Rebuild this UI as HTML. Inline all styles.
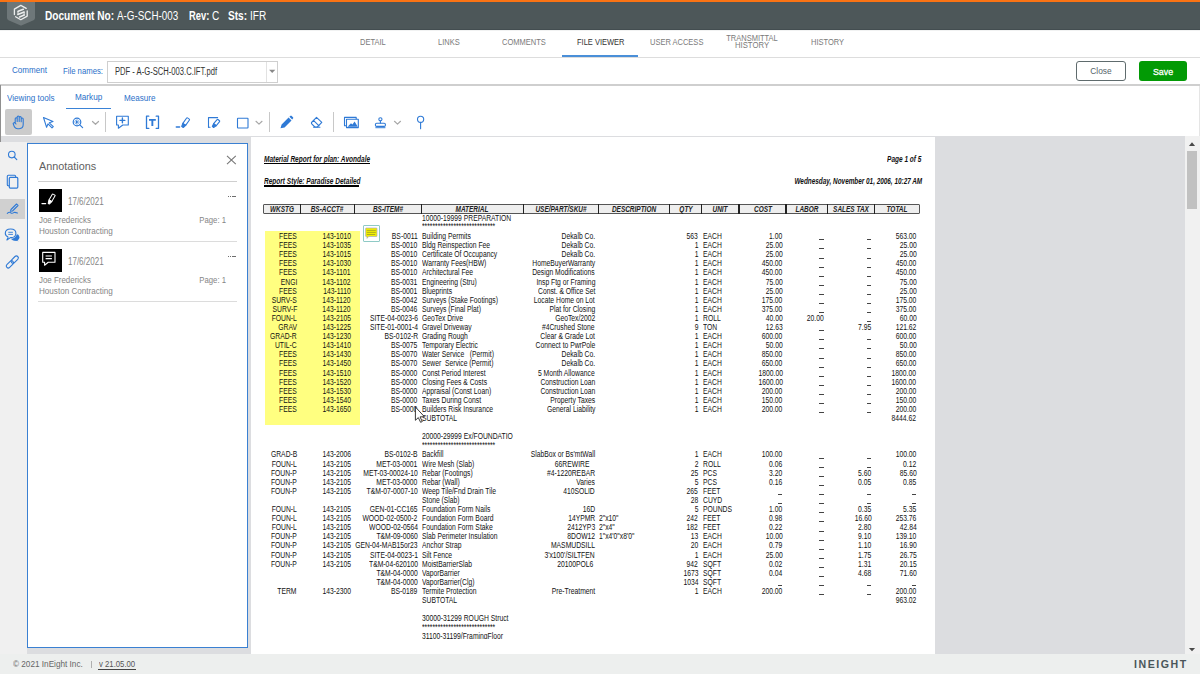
<!DOCTYPE html>
<html><head><meta charset="utf-8"><title>File Viewer</title>
<style>
html,body{margin:0;padding:0;}
body{width:1200px;height:674px;overflow:hidden;position:relative;background:#fff;font-family:"Liberation Sans", sans-serif;}
.t{position:absolute;white-space:nowrap;}
.z{position:absolute;width:0;height:0;}
.r{position:absolute;}
svg{position:absolute;overflow:visible;}
</style></head><body>

<div class="r" style="left:0px;top:0px;width:1200px;height:2px;background:#fa7314;"></div>
<div class="r" style="left:0px;top:2px;width:1200px;height:28px;background:#4d5759;"></div>
<div class="r" style="left:0px;top:29px;width:1200px;height:1px;background:#434d50;"></div>
<div class="r" style="left:0px;top:30px;width:1200px;height:1px;background:#f1f2f2;"></div>
<svg style="left:0;top:0" width="44" height="30" viewBox="0 0 44 30">
<path d="M7 2 H35 V18 Q35 19.5 33.5 20.3 L22 25.2 Q21 25.6 20 25.2 L8.5 20.3 Q7 19.5 7 18 Z" fill="#6e7779"/>
<g fill="none" stroke="#eceeee" stroke-width="1.3" stroke-linecap="round" stroke-linejoin="round">
<path d="M26.2 8.4 L20.8 5.4 L14.4 9.1 V14.6"/>
<path d="M15.6 16.8 L20.8 19.7 L27.2 16.1 V10.9"/>
<path d="M23.3 9.3 L18.1 11.3 M17.9 14.4 L24.1 12 M19.6 16.9 L24.2 15.1" stroke-width="1.6"/>
<path d="M18 11.4 V14.2 M24.1 12.2 V15" stroke-width="1"/>
</g>
</svg>
<div class="t" style="left:45.00px;top:9.54px;font-size:12px;line-height:12px;color:#fff;font-weight:bold;font-style:normal;transform:scaleX(0.843);transform-origin:0 0;">Document No:</div>
<div class="t" style="left:117.00px;top:9.54px;font-size:12px;line-height:12px;color:#fff;font-weight:normal;font-style:normal;transform:scaleX(0.82);transform-origin:0 0;">A-G-SCH-003</div>
<div class="t" style="left:189.00px;top:9.54px;font-size:12px;line-height:12px;color:#fff;font-weight:bold;font-style:normal;transform:scaleX(0.78);transform-origin:0 0;">Rev:</div>
<div class="t" style="left:211.60px;top:9.54px;font-size:12px;line-height:12px;color:#fff;font-weight:normal;font-style:normal;transform:scaleX(0.84);transform-origin:0 0;">C</div>
<div class="t" style="left:228.00px;top:9.54px;font-size:12px;line-height:12px;color:#fff;font-weight:bold;font-style:normal;transform:scaleX(0.843);transform-origin:0 0;">Sts:</div>
<div class="t" style="left:250.00px;top:9.54px;font-size:12px;line-height:12px;color:#fff;font-weight:normal;font-style:normal;transform:scaleX(0.84);transform-origin:0 0;">IFR</div>
<div class="r" style="left:0px;top:57px;width:1200px;height:1px;background:#dddddd;"></div>
<div class="t" style="left:359.80px;top:36.86px;font-size:9.5px;line-height:9.5px;color:#7a7a7a;font-weight:normal;font-style:normal;transform:scaleX(0.79);transform-origin:0 0;">DETAIL</div>
<div class="t" style="left:437.50px;top:36.86px;font-size:9.5px;line-height:9.5px;color:#7a7a7a;font-weight:normal;font-style:normal;transform:scaleX(0.79);transform-origin:0 0;">LINKS</div>
<div class="t" style="left:502.30px;top:36.86px;font-size:9.5px;line-height:9.5px;color:#7a7a7a;font-weight:normal;font-style:normal;transform:scaleX(0.79);transform-origin:0 0;">COMMENTS</div>
<div class="t" style="left:576.70px;top:36.86px;font-size:9.5px;line-height:9.5px;color:#333;font-weight:normal;font-style:normal;transform:scaleX(0.79);transform-origin:0 0;">FILE VIEWER</div>
<div class="r" style="left:562px;top:55px;width:76px;height:2px;background:#4a8fd8;"></div>
<div class="t" style="left:649.50px;top:36.86px;font-size:9.5px;line-height:9.5px;color:#7a7a7a;font-weight:normal;font-style:normal;transform:scaleX(0.79);transform-origin:0 0;">USER ACCESS</div>
<div class="t" style="left:751.50px;top:32.56px;font-size:9.5px;line-height:9.5px;color:#7a7a7a;font-weight:normal;font-style:normal;transform:translateX(-50%) scaleX(0.79);transform-origin:50% 0;">TRANSMITTAL</div>
<div class="t" style="left:751.50px;top:40.30px;font-size:9.8px;line-height:9.8px;color:#7a7a7a;font-weight:normal;font-style:normal;transform:translateX(-50%) scaleX(0.79);transform-origin:50% 0;">HISTORY</div>
<div class="t" style="left:810.50px;top:36.86px;font-size:9.5px;line-height:9.5px;color:#7a7a7a;font-weight:normal;font-style:normal;transform:scaleX(0.79);transform-origin:0 0;">HISTORY</div>
<div class="t" style="left:12.30px;top:65.47px;font-size:9.6px;line-height:9.6px;color:#2a6fc9;font-weight:normal;font-style:normal;transform:scaleX(0.84);transform-origin:0 0;">Comment</div>
<div class="t" style="left:63.00px;top:66.68px;font-size:9px;line-height:9px;color:#2a6fc9;font-weight:normal;font-style:normal;transform:scaleX(0.86);transform-origin:0 0;">File names:</div>
<div class="r" style="left:107px;top:61px;width:169px;height:20px;border:1px solid #cfcfcf;background:#fff;"></div>
<div class="r" style="left:266px;top:62px;width:1px;height:20px;background:#e2e2e2;"></div>
<svg style="left:268px;top:68px" width="9" height="6"><path d="M1.1 1.8 H7.3 L4.2 5 Z" fill="#888"/></svg>
<div class="t" style="left:114.60px;top:66.53px;font-size:10px;line-height:10px;color:#333;font-weight:normal;font-style:normal;transform:scaleX(0.762);transform-origin:0 0;">PDF - A-G-SCH-003.C.IFT.pdf</div>
<div class="r" style="left:1076px;top:61px;width:48px;height:18px;border:1px solid #5f6b6d;border-radius:3px;background:#fff;"></div>
<div class="t" style="left:1100.50px;top:66.93px;font-size:9.3px;line-height:9.3px;color:#55646a;font-weight:normal;font-style:normal;transform:translateX(-50%) scaleX(0.9);transform-origin:50% 0;">Close</div>
<div class="r" style="left:1139px;top:61px;width:48px;height:20px;border-radius:3px;background:#029a05;"></div>
<div class="t" style="left:1162.80px;top:66.67px;font-size:9.6px;line-height:9.6px;color:#fff;font-weight:normal;font-style:normal;transform:translateX(-50%) scaleX(0.92);transform-origin:50% 0;-webkit-text-stroke:0.3px #fff;">Save</div>
<div class="r" style="left:0px;top:84px;width:1200px;height:2px;background:#cfcfcf;"></div>
<div class="r" style="left:0px;top:85px;width:1.2px;height:57px;background:#8f8f8f;"></div>
<div class="r" style="left:1199px;top:86px;width:1px;height:50px;background:#e5e5e5;"></div>
<div class="t" style="left:7.00px;top:94.08px;font-size:9px;line-height:9px;color:#2a6fc9;font-weight:normal;font-style:normal;transform:scaleX(0.9);transform-origin:0 0;">Viewing tools</div>
<div class="t" style="left:75.00px;top:93.13px;font-size:9.3px;line-height:9.3px;color:#2a6fc9;font-weight:normal;font-style:normal;transform:scaleX(0.88);transform-origin:0 0;">Markup</div>
<div class="r" style="left:66px;top:107.8px;width:45px;height:1.6px;background:#3a82d6;"></div>
<div class="t" style="left:124.00px;top:94.08px;font-size:9px;line-height:9px;color:#2a6fc9;font-weight:normal;font-style:normal;transform:scaleX(0.9);transform-origin:0 0;">Measure</div>
<div class="r" style="left:5px;top:109px;width:27px;height:26px;border-radius:2px;background:#cbcbcb;"></div>
<svg style="left:0;top:100px" width="460" height="40" viewBox="0 100 460 40">
<g fill="none" stroke="#2f7ad6" stroke-width="1.1" stroke-linecap="round" stroke-linejoin="round">
<!-- hand -->
<path d="M15.2 122.5 V118.8 a1 1 0 0 1 2 0 V121.5 M17.2 121.5 V117 a1 1 0 0 1 2 0 V121.5 M19.2 121.5 V117.6 a1 1 0 0 1 2 0 V121.8 M21.2 121.8 V119 a1 1 0 0 1 2 0 V124.5 q0 4 -4 4.2 h-1.5 q-2 0 -3.3 -1.8 L13.4 124.3 q-.6 -1.2 .6 -1.6 q.9 -.3 1.5 .7 L16 124"/>
<!-- arrow -->
<path d="M43.5 117.5 L53 121.5 L49.3 122.8 L53.3 126.6 L52 127.8 L48 123.9 L46.6 127.3 Z"/>
<!-- zoom -->
<circle cx="77" cy="122" r="3.8" stroke-width="1.2"/>
<path d="M79.8 124.8 L82.6 127.6" stroke-width="1.2"/>
<circle cx="77" cy="122" r="2.1" stroke-width=".6" stroke-dasharray=".9 .7"/>
<!-- comment plus -->
<path d="M116.6 116.3 H128.3 V125 H122.8 L118.4 128.2 V125 H116.6 Z"/>
<path d="M122.4 118 V122.8 M120 120.4 H124.8" stroke-width="1.4"/>
<!-- T bracket -->
<path d="M148.8 116.2 H146.5 V128.4 H148.8 M156.2 116.2 H158.5 V128.4 H156.2" stroke-width="1.3"/>
<!-- highlighter -->
<g transform="translate(182.3 127.2) rotate(35)"><path d="M-1.7 -3.4 V-10 Q-1.7 -10.6 -1.1 -10.6 H1.1 Q1.7 -10.6 1.7 -10 V-3.4 Z"/><path d="M-1.7 -3.4 L-1 -0.3 H0.9 L1.7 -3.4 Z" fill="#2f7ad6"/></g>
<path d="M176.3 127 H179.6" stroke-width="1.4"/>
<!-- free text sign -->
<path d="M208.5 127.2 V117.6 H217.6"/>
<path d="M208.5 127.2 H210"/>
<g transform="translate(212.8 127.2) rotate(40)"><path d="M-1.6 -3.2 V-8.6 Q-1.6 -9.2 -1 -9.2 H1 Q1.6 -9.2 1.6 -8.6 V-3.2 Z"/><path d="M-1.6 -3.2 L-.9 -0.3 H0.8 L1.6 -3.2 Z" fill="#2f7ad6"/></g>
<!-- square -->
<rect x="237.5" y="118.3" width="10.5" height="9.7" rx=".5"/>
<!-- eraser -->
<path d="M311.5 122.5 L316.5 117.3 L321.8 122.4 L317.3 127 H314.8 L311.5 123.6 Z M313.5 120.4 L319 125.8"/>
<path d="M313.5 127.3 H320" stroke-width=".9"/>
<!-- image -->
<rect x="344.5" y="117.4" width="11.7" height="8.3"/>
<rect x="346.5" y="119.3" width="11.8" height="8.3" fill="#fff"/>
<!-- stamp -->
<circle cx="380.4" cy="119.3" r="1.6"/>
<path d="M380.4 121 V123"/>
<rect x="375.4" y="123.2" width="10" height="3.2" rx="1.2"/>
<!-- pin -->
<circle cx="420.6" cy="119.3" r="3.1"/>
<path d="M420.6 122.5 V128.8"/>
</g>
<path d="M149 118.9 H155.8 V120.8 H153.3 V126 H151.4 V120.8 H149 Z" fill="#2f7ad6"/>
<path d="M76 120.3 L78.6 122 L76 123.7 Z" fill="#2f7ad6"/>
<path d="M347.5 126.8 L351 123.2 L352.4 124.4 L354.6 121.5 L357.8 126.8 Z" fill="#2f7ad6"/>
<path d="M375.4 127.2 H385.4 V128.2 H375.4 Z" fill="#2f7ad6"/>
<path d="M280.5 128.3 L281.6 124.6 L288.6 117.6 L291.5 120.5 L284.5 127.5 Z M289.4 116.8 L290.3 115.9 a1 1 0 0 1 1.4 0 L293 117.2 a1 1 0 0 1 0 1.4 L292.2 119.5 Z" fill="#2f7ad6"/>
<g fill="none" stroke="#a8a8a8" stroke-width="1.2" stroke-linecap="round" stroke-linejoin="round">
<path d="M92.5 121.5 L95.5 124.3 L98.5 121.5"/>
<path d="M256 121.3 L259 124.1 L262 121.3"/>
<path d="M394.5 121.3 L397.5 124.1 L400.5 121.3"/>
</g>
<path d="M105.5 112 V132 M269.5 112 V132 M333.5 112 V132" stroke="#c8c8c8" stroke-width="1"/>
</svg>
<div class="r" style="left:0px;top:136px;width:1185px;height:518px;background:#dcdde0;"></div>
<div class="r" style="left:0px;top:136px;width:27px;height:6px;background:#dcdde0;"></div>
<div class="r" style="left:0px;top:142px;width:27px;height:512px;background:#f0f0f0;"></div>
<div class="r" style="left:0px;top:136px;width:1.2px;height:6px;background:#8f8f8f;"></div>
<div class="r" style="left:1185px;top:136px;width:15px;height:518px;background:#f1f1f1;"></div>
<svg style="left:1185px;top:136px" width="15" height="518"><path d="M3.9 10 L7 6.3 L10.1 10 Z" fill="#4a4a4a"/><path d="M3.9 512 L10.1 512 L7 515.2 Z" fill="#4a4a4a"/></svg>
<div class="r" style="left:1187px;top:151px;width:10px;height:58px;background:#c1c1c1;"></div>
<div class="r" style="left:0px;top:199px;width:25px;height:20px;background:#d0d0d0;"></div>
<svg style="left:0;top:140px" width="27" height="140" viewBox="0 140 27 140">
<g fill="none" stroke="#2f7ad6" stroke-width="1.1" stroke-linecap="round" stroke-linejoin="round">
<circle cx="11.8" cy="154.6" r="3.3"/>
<path d="M14.2 157 L16.8 159.6"/>
<rect x="7.3" y="175.3" width="8.3" height="10.5" rx="1"/>
<rect x="9.3" y="177.4" width="8.5" height="10.7" rx="1" fill="#f0f0f0" stroke-width="1.2"/>
<path d="M11 209.5 L16.5 204 L18 205.5 L12.5 211 L10.5 211.3 Z"/>
<path d="M7.3 213.3 q2 -1.8 3.5 -.5 q1.2 1 3 -.2 q1.3 -.6 3.6 .5"/>

<rect x="5.6" y="262.4" width="8.6" height="3.9" rx="1.95" transform="rotate(-45 9.9 264.35)"/>
<rect x="10.4" y="257.6" width="8.6" height="3.9" rx="1.95" transform="rotate(-45 14.7 259.55)"/>
</g>
<ellipse cx="15.1" cy="237.3" rx="4.3" ry="3.4" fill="#2f7ad6"/>
<path d="M16.5 239.5 L18.6 241.2 L14 240.2 Z" fill="#2f7ad6"/>
<ellipse cx="10.6" cy="233.3" rx="5.3" ry="4.3" fill="#f0f0f0" stroke="#f0f0f0" stroke-width="2.2"/>
<path d="M8 237 L6.8 240.2 L10.6 237.9" fill="#f0f0f0" stroke="#f0f0f0" stroke-width="1.5"/>
<g fill="none" stroke="#2f7ad6" stroke-width="1.1" stroke-linejoin="round">
<path d="M8.2 237.1 L6.9 240 L10.4 237.6 Q15.9 237.8 15.9 233.3 Q15.9 229 10.6 229 Q5.3 229 5.3 233.3 Q5.3 235.9 8.2 237.1"/>
<path d="M8.3 232.3 H12.9 M8.3 234.4 H12.9" stroke-width=".9"/>
</g>
</svg>
<div class="r" style="left:27px;top:143px;width:219px;height:503px;border:1px solid #3a80d2;background:#fff;"></div>
<div class="t" style="left:38.70px;top:160.51px;font-size:10.5px;line-height:10.5px;color:#606060;font-weight:normal;font-style:normal;transform:scaleX(1.03);transform-origin:0 0;">Annotations</div>
<svg style="left:226px;top:155px" width="11" height="10"><path d="M1 .8 L9.8 9.2 M9.8 .8 L1 9.2" stroke="#777" stroke-width="1.1"/></svg>
<div class="r" style="left:38px;top:181px;width:199px;height:1px;background:#cfcfcf;"></div>
<div class="r" style="left:39px;top:189px;width:23px;height:23px;background:#000;"></div>
<div class="t" style="left:67.80px;top:196.84px;font-size:10px;line-height:10px;color:#858585;font-weight:normal;font-style:normal;transform:scaleX(0.8);transform-origin:0 0;">17/6/2021</div>
<div class="t" style="left:38.50px;top:215.78px;font-size:9px;line-height:9px;color:#868686;font-weight:normal;font-style:normal;transform:scaleX(0.88);transform-origin:0 0;">Joe Fredericks</div>
<div class="t" style="left:38.50px;top:226.78px;font-size:9px;line-height:9px;color:#868686;font-weight:normal;font-style:normal;transform:scaleX(0.9);transform-origin:0 0;">Houston Contracting</div>
<div class="z" style="left:226.10px;top:216.38px;"><div class="t" style="right:0;top:0;font-size:9px;line-height:9px;color:#868686;font-weight:normal;font-style:normal;transform:scaleX(0.86);transform-origin:100% 0;">Page: 1</div></div>
<div class="r" style="left:228px;top:196px;width:8px;height:1px;background:repeating-linear-gradient(90deg,#6e6e6e 0 1.4px,transparent 1.4px 2.1px);"></div>
<div class="r" style="left:38px;top:241px;width:199px;height:1px;background:#dcdcdc;"></div>
<div class="r" style="left:39px;top:249px;width:23px;height:23px;background:#000;"></div>
<div class="t" style="left:67.80px;top:256.84px;font-size:10px;line-height:10px;color:#858585;font-weight:normal;font-style:normal;transform:scaleX(0.8);transform-origin:0 0;">17/6/2021</div>
<div class="t" style="left:38.50px;top:275.78px;font-size:9px;line-height:9px;color:#868686;font-weight:normal;font-style:normal;transform:scaleX(0.88);transform-origin:0 0;">Joe Fredericks</div>
<div class="t" style="left:38.50px;top:286.78px;font-size:9px;line-height:9px;color:#868686;font-weight:normal;font-style:normal;transform:scaleX(0.9);transform-origin:0 0;">Houston Contracting</div>
<div class="z" style="left:226.10px;top:276.38px;"><div class="t" style="right:0;top:0;font-size:9px;line-height:9px;color:#868686;font-weight:normal;font-style:normal;transform:scaleX(0.86);transform-origin:100% 0;">Page: 1</div></div>
<div class="r" style="left:228px;top:256px;width:8px;height:1px;background:repeating-linear-gradient(90deg,#6e6e6e 0 1.4px,transparent 1.4px 2.1px);"></div>
<div class="r" style="left:38px;top:301px;width:199px;height:1px;background:#dcdcdc;"></div>
<svg style="left:39px;top:189px" width="23" height="23" viewBox="0 0 23 23">
<g fill="none" stroke="#fff" stroke-width="1.1" stroke-linejoin="round" stroke-linecap="round">
<g transform="translate(9.6 14.9) rotate(30)" stroke-width="1"><path d="M-1.6 -3.6 V-10.2 Q-1.6 -10.7 -1.1 -10.7 H1.1 Q1.6 -10.7 1.6 -10.2 V-3.6 Z"/><path d="M-1.6 -3.6 L-.6 -0.2 H.6 L1.6 -3.6 Z" fill="#fff"/></g>
<path d="M2.9 14.6 H6.7" stroke-width="1.1"/>
</g></svg>
<svg style="left:39px;top:249px" width="23" height="23" viewBox="0 0 23 23">
<g fill="none" stroke="#fff" stroke-width="1.1" stroke-linejoin="round">
<path d="M3.7 3.4 H16 V13.3 H9.2 L5.6 16.2 V13.3 H3.7 Z"/>
<path d="M6.6 7 H12.9 M6.6 9.7 H12.9" stroke-width="1.2"/>
</g></svg>
<div class="r" style="left:0px;top:654px;width:1200px;height:20px;background:#edefee;"></div>
<div class="t" style="left:13.00px;top:659.88px;font-size:9px;line-height:9px;color:#666;font-weight:normal;font-style:normal;transform:scaleX(0.91);transform-origin:0 0;">© 2021 InEight Inc.</div>
<div class="r" style="left:91px;top:661px;width:1px;height:7px;background:#b0b0b0;"></div>
<div class="t" style="left:98.50px;top:659.88px;font-size:9px;line-height:9px;color:#555;font-weight:normal;font-style:normal;transform:scaleX(0.86);transform-origin:0 0;">v 21.05.00</div>
<div class="r" style="left:98px;top:668.5px;width:38px;height:1px;background:#444;"></div>
<div class="t" style="left:1134.30px;top:659.53px;font-size:10px;line-height:10px;color:#4a565a;font-weight:bold;font-style:normal;transform:scaleX(1.06);transform-origin:0 0;letter-spacing:1.45px;">INEIGHT</div>
<div class="r" style="left:251px;top:137px;width:684px;height:517px;background:#fff;"></div>
<div class="r" style="left:0;top:0;width:1200px;height:639px;overflow:hidden;">
<div class="t" style="left:264.20px;top:155.15px;font-size:8.8px;line-height:8.8px;color:#111;font-weight:bold;font-style:italic;transform:scaleX(0.74);transform-origin:0 0;">Material Report for plan: Avondale</div>
<div class="r" style="left:264px;top:162.5px;width:105.5px;height:1.5px;background:#000;"></div>
<div class="t" style="left:264.20px;top:176.95px;font-size:8.8px;line-height:8.8px;color:#111;font-weight:bold;font-style:italic;transform:scaleX(0.74);transform-origin:0 0;">Report Style: Paradise Detailed</div>
<div class="r" style="left:263.5px;top:185px;width:95px;height:1.6px;background:#000;"></div>
<div class="z" style="left:921.80px;top:155.15px;"><div class="t" style="right:0;top:0;font-size:8.8px;line-height:8.8px;color:#111;font-weight:bold;font-style:italic;transform:scaleX(0.74);transform-origin:100% 0;">Page 1 of 5</div></div>
<div class="z" style="left:922.40px;top:176.95px;"><div class="t" style="right:0;top:0;font-size:8.8px;line-height:8.8px;color:#111;font-weight:bold;font-style:italic;transform:scaleX(0.725);transform-origin:100% 0;">Wednesday, November 01, 2006, 10:27 AM</div></div>
<div class="r" style="left:263px;top:204px;width:655px;height:8px;border:1.2px solid #555;border-radius:1px;background:#eeeeee;"></div>
<div class="r" style="left:299.9px;top:204px;width:1.3px;height:10px;background:#222;"></div>
<div class="r" style="left:353.7px;top:204px;width:1.3px;height:10px;background:#222;"></div>
<div class="r" style="left:420.9px;top:204px;width:1.3px;height:10px;background:#222;"></div>
<div class="r" style="left:522.6999999999999px;top:204px;width:1.3px;height:10px;background:#222;"></div>
<div class="r" style="left:598.1px;top:204px;width:1.3px;height:10px;background:#222;"></div>
<div class="r" style="left:669.1px;top:204px;width:1.3px;height:10px;background:#222;"></div>
<div class="r" style="left:700.9px;top:204px;width:1.3px;height:10px;background:#222;"></div>
<div class="r" style="left:738.4px;top:204px;width:1.3px;height:10px;background:#222;"></div>
<div class="r" style="left:785.4px;top:204px;width:1.3px;height:10px;background:#222;"></div>
<div class="r" style="left:826.6px;top:204px;width:1.3px;height:10px;background:#222;"></div>
<div class="r" style="left:873.6px;top:204px;width:1.3px;height:10px;background:#222;"></div>
<div class="t" style="left:281.75px;top:203.90px;font-size:9.8px;line-height:9.8px;color:#222;font-weight:bold;font-style:italic;transform:translateX(-50%) scaleX(0.66);transform-origin:50% 0;">WKSTG</div>
<div class="t" style="left:327.40px;top:203.90px;font-size:9.8px;line-height:9.8px;color:#222;font-weight:bold;font-style:italic;transform:translateX(-50%) scaleX(0.66);transform-origin:50% 0;">BS-ACCT#</div>
<div class="t" style="left:387.90px;top:203.90px;font-size:9.8px;line-height:9.8px;color:#222;font-weight:bold;font-style:italic;transform:translateX(-50%) scaleX(0.66);transform-origin:50% 0;">BS-ITEM#</div>
<div class="t" style="left:472.40px;top:203.90px;font-size:9.8px;line-height:9.8px;color:#222;font-weight:bold;font-style:italic;transform:translateX(-50%) scaleX(0.66);transform-origin:50% 0;">MATERIAL</div>
<div class="t" style="left:561.00px;top:203.90px;font-size:9.8px;line-height:9.8px;color:#222;font-weight:bold;font-style:italic;transform:translateX(-50%) scaleX(0.66);transform-origin:50% 0;">USE/PART/SKU#</div>
<div class="t" style="left:634.20px;top:203.90px;font-size:9.8px;line-height:9.8px;color:#222;font-weight:bold;font-style:italic;transform:translateX(-50%) scaleX(0.66);transform-origin:50% 0;">DESCRIPTION</div>
<div class="t" style="left:685.60px;top:203.90px;font-size:9.8px;line-height:9.8px;color:#222;font-weight:bold;font-style:italic;transform:translateX(-50%) scaleX(0.66);transform-origin:50% 0;">QTY</div>
<div class="t" style="left:720.25px;top:203.90px;font-size:9.8px;line-height:9.8px;color:#222;font-weight:bold;font-style:italic;transform:translateX(-50%) scaleX(0.66);transform-origin:50% 0;">UNIT</div>
<div class="t" style="left:762.50px;top:203.90px;font-size:9.8px;line-height:9.8px;color:#222;font-weight:bold;font-style:italic;transform:translateX(-50%) scaleX(0.66);transform-origin:50% 0;">COST</div>
<div class="t" style="left:806.60px;top:203.90px;font-size:9.8px;line-height:9.8px;color:#222;font-weight:bold;font-style:italic;transform:translateX(-50%) scaleX(0.66);transform-origin:50% 0;">LABOR</div>
<div class="t" style="left:850.70px;top:203.90px;font-size:9.8px;line-height:9.8px;color:#222;font-weight:bold;font-style:italic;transform:translateX(-50%) scaleX(0.66);transform-origin:50% 0;">SALES TAX</div>
<div class="t" style="left:896.85px;top:203.90px;font-size:9.8px;line-height:9.8px;color:#222;font-weight:bold;font-style:italic;transform:translateX(-50%) scaleX(0.66);transform-origin:50% 0;">TOTAL</div>
<div class="r" style="left:264.6px;top:231px;width:95.7px;height:194px;background:#ffff80;"></div>
<div class="r" style="left:363px;top:224.5px;width:14.5px;height:15.5px;border:1px solid #8fcac6;border-radius:1px;"></div>
<svg style="left:363px;top:224px" width="18" height="18" viewBox="0 0 18 18">
<path d="M2.6 4.6 Q2.6 4 3.2 4 H13.4 Q14 4 14 4.6 V11.9 Q14 12.5 13.4 12.5 H5.6 L4 14.4 V12.5 H3.2 Q2.6 12.5 2.6 11.9 Z" fill="#f2f000" stroke="#9c9ccc" stroke-width=".6"/>
<path d="M3.8 6.4 H12.8 M3.8 8.4 H12.8 M3.8 10.5 H12.2" stroke="#9a9a2a" stroke-width=".75"/>
</svg>
<div class="t" style="left:422.00px;top:213.87px;font-size:8.3px;line-height:8.3px;color:#111;font-weight:normal;font-style:normal;transform:scaleX(0.815);transform-origin:0 0;">10000-19999 PREPARATION</div>
<div class="t" style="left:422.00px;top:222.27px;font-size:8.3px;line-height:8.3px;color:#111;font-weight:normal;font-style:normal;transform:scaleX(0.81);transform-origin:0 0;">****************************</div>
<div class="z" style="left:297.00px;top:232.07px;"><div class="t" style="right:0;top:0;font-size:8.3px;line-height:8.3px;color:#111;font-weight:normal;font-style:normal;transform:scaleX(0.815);transform-origin:100% 0;">FEES</div></div>
<div class="z" style="left:350.80px;top:232.07px;"><div class="t" style="right:0;top:0;font-size:8.3px;line-height:8.3px;color:#111;font-weight:normal;font-style:normal;transform:scaleX(0.815);transform-origin:100% 0;">143-1010</div></div>
<div class="z" style="left:417.60px;top:232.07px;"><div class="t" style="right:0;top:0;font-size:8.3px;line-height:8.3px;color:#111;font-weight:normal;font-style:normal;transform:scaleX(0.815);transform-origin:100% 0;">BS-0011</div></div>
<div class="t" style="left:422.00px;top:232.07px;font-size:8.3px;line-height:8.3px;color:#111;font-weight:normal;font-style:normal;transform:scaleX(0.815);transform-origin:0 0;white-space:pre;">Building Permits</div>
<div class="z" style="left:595.00px;top:232.07px;"><div class="t" style="right:0;top:0;font-size:8.3px;line-height:8.3px;color:#111;font-weight:normal;font-style:normal;transform:scaleX(0.815);transform-origin:100% 0;">Dekalb Co.</div></div>
<div class="z" style="left:698.30px;top:232.07px;"><div class="t" style="right:0;top:0;font-size:8.3px;line-height:8.3px;color:#111;font-weight:normal;font-style:normal;transform:scaleX(0.815);transform-origin:100% 0;">563</div></div>
<div class="t" style="left:702.70px;top:232.07px;font-size:8.3px;line-height:8.3px;color:#111;font-weight:normal;font-style:normal;transform:scaleX(0.815);transform-origin:0 0;">EACH</div>
<div class="z" style="left:782.50px;top:232.07px;"><div class="t" style="right:0;top:0;font-size:8.3px;line-height:8.3px;color:#111;font-weight:normal;font-style:normal;transform:scaleX(0.815);transform-origin:100% 0;">1.00</div></div>
<div class="r" style="left:819.3px;top:239px;width:4.8px;height:1px;background:#444;"></div>
<div class="r" style="left:866.6px;top:239px;width:4.8px;height:1px;background:#444;"></div>
<div class="z" style="left:916.40px;top:232.07px;"><div class="t" style="right:0;top:0;font-size:8.3px;line-height:8.3px;color:#111;font-weight:normal;font-style:normal;transform:scaleX(0.815);transform-origin:100% 0;">563.00</div></div>
<div class="z" style="left:297.00px;top:241.17px;"><div class="t" style="right:0;top:0;font-size:8.3px;line-height:8.3px;color:#111;font-weight:normal;font-style:normal;transform:scaleX(0.815);transform-origin:100% 0;">FEES</div></div>
<div class="z" style="left:350.80px;top:241.17px;"><div class="t" style="right:0;top:0;font-size:8.3px;line-height:8.3px;color:#111;font-weight:normal;font-style:normal;transform:scaleX(0.815);transform-origin:100% 0;">143-1035</div></div>
<div class="z" style="left:417.60px;top:241.17px;"><div class="t" style="right:0;top:0;font-size:8.3px;line-height:8.3px;color:#111;font-weight:normal;font-style:normal;transform:scaleX(0.815);transform-origin:100% 0;">BS-0010</div></div>
<div class="t" style="left:422.00px;top:241.17px;font-size:8.3px;line-height:8.3px;color:#111;font-weight:normal;font-style:normal;transform:scaleX(0.815);transform-origin:0 0;white-space:pre;">Bldg Reinspection Fee</div>
<div class="z" style="left:595.00px;top:241.17px;"><div class="t" style="right:0;top:0;font-size:8.3px;line-height:8.3px;color:#111;font-weight:normal;font-style:normal;transform:scaleX(0.815);transform-origin:100% 0;">Dekalb Co.</div></div>
<div class="z" style="left:698.30px;top:241.17px;"><div class="t" style="right:0;top:0;font-size:8.3px;line-height:8.3px;color:#111;font-weight:normal;font-style:normal;transform:scaleX(0.815);transform-origin:100% 0;">1</div></div>
<div class="t" style="left:702.70px;top:241.17px;font-size:8.3px;line-height:8.3px;color:#111;font-weight:normal;font-style:normal;transform:scaleX(0.815);transform-origin:0 0;">EACH</div>
<div class="z" style="left:782.50px;top:241.17px;"><div class="t" style="right:0;top:0;font-size:8.3px;line-height:8.3px;color:#111;font-weight:normal;font-style:normal;transform:scaleX(0.815);transform-origin:100% 0;">25.00</div></div>
<div class="r" style="left:819.3px;top:248px;width:4.8px;height:1px;background:#444;"></div>
<div class="r" style="left:866.6px;top:248px;width:4.8px;height:1px;background:#444;"></div>
<div class="z" style="left:916.40px;top:241.17px;"><div class="t" style="right:0;top:0;font-size:8.3px;line-height:8.3px;color:#111;font-weight:normal;font-style:normal;transform:scaleX(0.815);transform-origin:100% 0;">25.00</div></div>
<div class="z" style="left:297.00px;top:250.27px;"><div class="t" style="right:0;top:0;font-size:8.3px;line-height:8.3px;color:#111;font-weight:normal;font-style:normal;transform:scaleX(0.815);transform-origin:100% 0;">FEES</div></div>
<div class="z" style="left:350.80px;top:250.27px;"><div class="t" style="right:0;top:0;font-size:8.3px;line-height:8.3px;color:#111;font-weight:normal;font-style:normal;transform:scaleX(0.815);transform-origin:100% 0;">143-1015</div></div>
<div class="z" style="left:417.60px;top:250.27px;"><div class="t" style="right:0;top:0;font-size:8.3px;line-height:8.3px;color:#111;font-weight:normal;font-style:normal;transform:scaleX(0.815);transform-origin:100% 0;">BS-0010</div></div>
<div class="t" style="left:422.00px;top:250.27px;font-size:8.3px;line-height:8.3px;color:#111;font-weight:normal;font-style:normal;transform:scaleX(0.815);transform-origin:0 0;white-space:pre;">Certificate Of Occupancy</div>
<div class="z" style="left:595.00px;top:250.27px;"><div class="t" style="right:0;top:0;font-size:8.3px;line-height:8.3px;color:#111;font-weight:normal;font-style:normal;transform:scaleX(0.815);transform-origin:100% 0;">Dekalb Co.</div></div>
<div class="z" style="left:698.30px;top:250.27px;"><div class="t" style="right:0;top:0;font-size:8.3px;line-height:8.3px;color:#111;font-weight:normal;font-style:normal;transform:scaleX(0.815);transform-origin:100% 0;">1</div></div>
<div class="t" style="left:702.70px;top:250.27px;font-size:8.3px;line-height:8.3px;color:#111;font-weight:normal;font-style:normal;transform:scaleX(0.815);transform-origin:0 0;">EACH</div>
<div class="z" style="left:782.50px;top:250.27px;"><div class="t" style="right:0;top:0;font-size:8.3px;line-height:8.3px;color:#111;font-weight:normal;font-style:normal;transform:scaleX(0.815);transform-origin:100% 0;">25.00</div></div>
<div class="r" style="left:819.3px;top:258px;width:4.8px;height:1px;background:#444;"></div>
<div class="r" style="left:866.6px;top:258px;width:4.8px;height:1px;background:#444;"></div>
<div class="z" style="left:916.40px;top:250.27px;"><div class="t" style="right:0;top:0;font-size:8.3px;line-height:8.3px;color:#111;font-weight:normal;font-style:normal;transform:scaleX(0.815);transform-origin:100% 0;">25.00</div></div>
<div class="z" style="left:297.00px;top:259.37px;"><div class="t" style="right:0;top:0;font-size:8.3px;line-height:8.3px;color:#111;font-weight:normal;font-style:normal;transform:scaleX(0.815);transform-origin:100% 0;">FEES</div></div>
<div class="z" style="left:350.80px;top:259.37px;"><div class="t" style="right:0;top:0;font-size:8.3px;line-height:8.3px;color:#111;font-weight:normal;font-style:normal;transform:scaleX(0.815);transform-origin:100% 0;">143-1030</div></div>
<div class="z" style="left:417.60px;top:259.37px;"><div class="t" style="right:0;top:0;font-size:8.3px;line-height:8.3px;color:#111;font-weight:normal;font-style:normal;transform:scaleX(0.815);transform-origin:100% 0;">BS-0010</div></div>
<div class="t" style="left:422.00px;top:259.37px;font-size:8.3px;line-height:8.3px;color:#111;font-weight:normal;font-style:normal;transform:scaleX(0.815);transform-origin:0 0;white-space:pre;">Warranty Fees(HBW)</div>
<div class="z" style="left:595.00px;top:259.37px;"><div class="t" style="right:0;top:0;font-size:8.3px;line-height:8.3px;color:#111;font-weight:normal;font-style:normal;transform:scaleX(0.815);transform-origin:100% 0;">HomeBuyerWarranty</div></div>
<div class="z" style="left:698.30px;top:259.37px;"><div class="t" style="right:0;top:0;font-size:8.3px;line-height:8.3px;color:#111;font-weight:normal;font-style:normal;transform:scaleX(0.815);transform-origin:100% 0;">1</div></div>
<div class="t" style="left:702.70px;top:259.37px;font-size:8.3px;line-height:8.3px;color:#111;font-weight:normal;font-style:normal;transform:scaleX(0.815);transform-origin:0 0;">EACH</div>
<div class="z" style="left:782.50px;top:259.37px;"><div class="t" style="right:0;top:0;font-size:8.3px;line-height:8.3px;color:#111;font-weight:normal;font-style:normal;transform:scaleX(0.815);transform-origin:100% 0;">450.00</div></div>
<div class="r" style="left:819.3px;top:267px;width:4.8px;height:1px;background:#444;"></div>
<div class="r" style="left:866.6px;top:267px;width:4.8px;height:1px;background:#444;"></div>
<div class="z" style="left:916.40px;top:259.37px;"><div class="t" style="right:0;top:0;font-size:8.3px;line-height:8.3px;color:#111;font-weight:normal;font-style:normal;transform:scaleX(0.815);transform-origin:100% 0;">450.00</div></div>
<div class="z" style="left:297.00px;top:268.47px;"><div class="t" style="right:0;top:0;font-size:8.3px;line-height:8.3px;color:#111;font-weight:normal;font-style:normal;transform:scaleX(0.815);transform-origin:100% 0;">FEES</div></div>
<div class="z" style="left:350.80px;top:268.47px;"><div class="t" style="right:0;top:0;font-size:8.3px;line-height:8.3px;color:#111;font-weight:normal;font-style:normal;transform:scaleX(0.815);transform-origin:100% 0;">143-1101</div></div>
<div class="z" style="left:417.60px;top:268.47px;"><div class="t" style="right:0;top:0;font-size:8.3px;line-height:8.3px;color:#111;font-weight:normal;font-style:normal;transform:scaleX(0.815);transform-origin:100% 0;">BS-0010</div></div>
<div class="t" style="left:422.00px;top:268.47px;font-size:8.3px;line-height:8.3px;color:#111;font-weight:normal;font-style:normal;transform:scaleX(0.815);transform-origin:0 0;white-space:pre;">Architectural Fee</div>
<div class="z" style="left:595.00px;top:268.47px;"><div class="t" style="right:0;top:0;font-size:8.3px;line-height:8.3px;color:#111;font-weight:normal;font-style:normal;transform:scaleX(0.815);transform-origin:100% 0;">Design Modifications</div></div>
<div class="z" style="left:698.30px;top:268.47px;"><div class="t" style="right:0;top:0;font-size:8.3px;line-height:8.3px;color:#111;font-weight:normal;font-style:normal;transform:scaleX(0.815);transform-origin:100% 0;">1</div></div>
<div class="t" style="left:702.70px;top:268.47px;font-size:8.3px;line-height:8.3px;color:#111;font-weight:normal;font-style:normal;transform:scaleX(0.815);transform-origin:0 0;">EACH</div>
<div class="z" style="left:782.50px;top:268.47px;"><div class="t" style="right:0;top:0;font-size:8.3px;line-height:8.3px;color:#111;font-weight:normal;font-style:normal;transform:scaleX(0.815);transform-origin:100% 0;">450.00</div></div>
<div class="r" style="left:819.3px;top:276px;width:4.8px;height:1px;background:#444;"></div>
<div class="r" style="left:866.6px;top:276px;width:4.8px;height:1px;background:#444;"></div>
<div class="z" style="left:916.40px;top:268.47px;"><div class="t" style="right:0;top:0;font-size:8.3px;line-height:8.3px;color:#111;font-weight:normal;font-style:normal;transform:scaleX(0.815);transform-origin:100% 0;">450.00</div></div>
<div class="z" style="left:297.00px;top:277.57px;"><div class="t" style="right:0;top:0;font-size:8.3px;line-height:8.3px;color:#111;font-weight:normal;font-style:normal;transform:scaleX(0.815);transform-origin:100% 0;">ENGI</div></div>
<div class="z" style="left:350.80px;top:277.57px;"><div class="t" style="right:0;top:0;font-size:8.3px;line-height:8.3px;color:#111;font-weight:normal;font-style:normal;transform:scaleX(0.815);transform-origin:100% 0;">143-1102</div></div>
<div class="z" style="left:417.60px;top:277.57px;"><div class="t" style="right:0;top:0;font-size:8.3px;line-height:8.3px;color:#111;font-weight:normal;font-style:normal;transform:scaleX(0.815);transform-origin:100% 0;">BS-0031</div></div>
<div class="t" style="left:422.00px;top:277.57px;font-size:8.3px;line-height:8.3px;color:#111;font-weight:normal;font-style:normal;transform:scaleX(0.815);transform-origin:0 0;white-space:pre;">Engineering (Stru)</div>
<div class="z" style="left:595.00px;top:277.57px;"><div class="t" style="right:0;top:0;font-size:8.3px;line-height:8.3px;color:#111;font-weight:normal;font-style:normal;transform:scaleX(0.815);transform-origin:100% 0;">Insp Ftg or Framing</div></div>
<div class="z" style="left:698.30px;top:277.57px;"><div class="t" style="right:0;top:0;font-size:8.3px;line-height:8.3px;color:#111;font-weight:normal;font-style:normal;transform:scaleX(0.815);transform-origin:100% 0;">1</div></div>
<div class="t" style="left:702.70px;top:277.57px;font-size:8.3px;line-height:8.3px;color:#111;font-weight:normal;font-style:normal;transform:scaleX(0.815);transform-origin:0 0;">EACH</div>
<div class="z" style="left:782.50px;top:277.57px;"><div class="t" style="right:0;top:0;font-size:8.3px;line-height:8.3px;color:#111;font-weight:normal;font-style:normal;transform:scaleX(0.815);transform-origin:100% 0;">75.00</div></div>
<div class="r" style="left:819.3px;top:285px;width:4.8px;height:1px;background:#444;"></div>
<div class="r" style="left:866.6px;top:285px;width:4.8px;height:1px;background:#444;"></div>
<div class="z" style="left:916.40px;top:277.57px;"><div class="t" style="right:0;top:0;font-size:8.3px;line-height:8.3px;color:#111;font-weight:normal;font-style:normal;transform:scaleX(0.815);transform-origin:100% 0;">75.00</div></div>
<div class="z" style="left:297.00px;top:286.67px;"><div class="t" style="right:0;top:0;font-size:8.3px;line-height:8.3px;color:#111;font-weight:normal;font-style:normal;transform:scaleX(0.815);transform-origin:100% 0;">FEES</div></div>
<div class="z" style="left:350.80px;top:286.67px;"><div class="t" style="right:0;top:0;font-size:8.3px;line-height:8.3px;color:#111;font-weight:normal;font-style:normal;transform:scaleX(0.815);transform-origin:100% 0;">143-1110</div></div>
<div class="z" style="left:417.60px;top:286.67px;"><div class="t" style="right:0;top:0;font-size:8.3px;line-height:8.3px;color:#111;font-weight:normal;font-style:normal;transform:scaleX(0.815);transform-origin:100% 0;">BS-0001</div></div>
<div class="t" style="left:422.00px;top:286.67px;font-size:8.3px;line-height:8.3px;color:#111;font-weight:normal;font-style:normal;transform:scaleX(0.815);transform-origin:0 0;white-space:pre;">Blueprints</div>
<div class="z" style="left:595.00px;top:286.67px;"><div class="t" style="right:0;top:0;font-size:8.3px;line-height:8.3px;color:#111;font-weight:normal;font-style:normal;transform:scaleX(0.815);transform-origin:100% 0;">Const. &amp; Office Set</div></div>
<div class="z" style="left:698.30px;top:286.67px;"><div class="t" style="right:0;top:0;font-size:8.3px;line-height:8.3px;color:#111;font-weight:normal;font-style:normal;transform:scaleX(0.815);transform-origin:100% 0;">1</div></div>
<div class="t" style="left:702.70px;top:286.67px;font-size:8.3px;line-height:8.3px;color:#111;font-weight:normal;font-style:normal;transform:scaleX(0.815);transform-origin:0 0;">EACH</div>
<div class="z" style="left:782.50px;top:286.67px;"><div class="t" style="right:0;top:0;font-size:8.3px;line-height:8.3px;color:#111;font-weight:normal;font-style:normal;transform:scaleX(0.815);transform-origin:100% 0;">25.00</div></div>
<div class="r" style="left:819.3px;top:294px;width:4.8px;height:1px;background:#444;"></div>
<div class="r" style="left:866.6px;top:294px;width:4.8px;height:1px;background:#444;"></div>
<div class="z" style="left:916.40px;top:286.67px;"><div class="t" style="right:0;top:0;font-size:8.3px;line-height:8.3px;color:#111;font-weight:normal;font-style:normal;transform:scaleX(0.815);transform-origin:100% 0;">25.00</div></div>
<div class="z" style="left:297.00px;top:295.77px;"><div class="t" style="right:0;top:0;font-size:8.3px;line-height:8.3px;color:#111;font-weight:normal;font-style:normal;transform:scaleX(0.815);transform-origin:100% 0;">SURV-S</div></div>
<div class="z" style="left:350.80px;top:295.77px;"><div class="t" style="right:0;top:0;font-size:8.3px;line-height:8.3px;color:#111;font-weight:normal;font-style:normal;transform:scaleX(0.815);transform-origin:100% 0;">143-1120</div></div>
<div class="z" style="left:417.60px;top:295.77px;"><div class="t" style="right:0;top:0;font-size:8.3px;line-height:8.3px;color:#111;font-weight:normal;font-style:normal;transform:scaleX(0.815);transform-origin:100% 0;">BS-0042</div></div>
<div class="t" style="left:422.00px;top:295.77px;font-size:8.3px;line-height:8.3px;color:#111;font-weight:normal;font-style:normal;transform:scaleX(0.815);transform-origin:0 0;white-space:pre;">Surveys (Stake Footings)</div>
<div class="z" style="left:595.00px;top:295.77px;"><div class="t" style="right:0;top:0;font-size:8.3px;line-height:8.3px;color:#111;font-weight:normal;font-style:normal;transform:scaleX(0.815);transform-origin:100% 0;">Locate Home on Lot</div></div>
<div class="z" style="left:698.30px;top:295.77px;"><div class="t" style="right:0;top:0;font-size:8.3px;line-height:8.3px;color:#111;font-weight:normal;font-style:normal;transform:scaleX(0.815);transform-origin:100% 0;">1</div></div>
<div class="t" style="left:702.70px;top:295.77px;font-size:8.3px;line-height:8.3px;color:#111;font-weight:normal;font-style:normal;transform:scaleX(0.815);transform-origin:0 0;">EACH</div>
<div class="z" style="left:782.50px;top:295.77px;"><div class="t" style="right:0;top:0;font-size:8.3px;line-height:8.3px;color:#111;font-weight:normal;font-style:normal;transform:scaleX(0.815);transform-origin:100% 0;">175.00</div></div>
<div class="r" style="left:819.3px;top:303px;width:4.8px;height:1px;background:#444;"></div>
<div class="r" style="left:866.6px;top:303px;width:4.8px;height:1px;background:#444;"></div>
<div class="z" style="left:916.40px;top:295.77px;"><div class="t" style="right:0;top:0;font-size:8.3px;line-height:8.3px;color:#111;font-weight:normal;font-style:normal;transform:scaleX(0.815);transform-origin:100% 0;">175.00</div></div>
<div class="z" style="left:297.00px;top:304.87px;"><div class="t" style="right:0;top:0;font-size:8.3px;line-height:8.3px;color:#111;font-weight:normal;font-style:normal;transform:scaleX(0.815);transform-origin:100% 0;">SURV-F</div></div>
<div class="z" style="left:350.80px;top:304.87px;"><div class="t" style="right:0;top:0;font-size:8.3px;line-height:8.3px;color:#111;font-weight:normal;font-style:normal;transform:scaleX(0.815);transform-origin:100% 0;">143-1120</div></div>
<div class="z" style="left:417.60px;top:304.87px;"><div class="t" style="right:0;top:0;font-size:8.3px;line-height:8.3px;color:#111;font-weight:normal;font-style:normal;transform:scaleX(0.815);transform-origin:100% 0;">BS-0046</div></div>
<div class="t" style="left:422.00px;top:304.87px;font-size:8.3px;line-height:8.3px;color:#111;font-weight:normal;font-style:normal;transform:scaleX(0.815);transform-origin:0 0;white-space:pre;">Surveys (Final Plat)</div>
<div class="z" style="left:595.00px;top:304.87px;"><div class="t" style="right:0;top:0;font-size:8.3px;line-height:8.3px;color:#111;font-weight:normal;font-style:normal;transform:scaleX(0.815);transform-origin:100% 0;">Plat for Closing</div></div>
<div class="z" style="left:698.30px;top:304.87px;"><div class="t" style="right:0;top:0;font-size:8.3px;line-height:8.3px;color:#111;font-weight:normal;font-style:normal;transform:scaleX(0.815);transform-origin:100% 0;">1</div></div>
<div class="t" style="left:702.70px;top:304.87px;font-size:8.3px;line-height:8.3px;color:#111;font-weight:normal;font-style:normal;transform:scaleX(0.815);transform-origin:0 0;">EACH</div>
<div class="z" style="left:782.50px;top:304.87px;"><div class="t" style="right:0;top:0;font-size:8.3px;line-height:8.3px;color:#111;font-weight:normal;font-style:normal;transform:scaleX(0.815);transform-origin:100% 0;">375.00</div></div>
<div class="r" style="left:819.3px;top:312px;width:4.8px;height:1px;background:#444;"></div>
<div class="r" style="left:866.6px;top:312px;width:4.8px;height:1px;background:#444;"></div>
<div class="z" style="left:916.40px;top:304.87px;"><div class="t" style="right:0;top:0;font-size:8.3px;line-height:8.3px;color:#111;font-weight:normal;font-style:normal;transform:scaleX(0.815);transform-origin:100% 0;">375.00</div></div>
<div class="z" style="left:297.00px;top:313.97px;"><div class="t" style="right:0;top:0;font-size:8.3px;line-height:8.3px;color:#111;font-weight:normal;font-style:normal;transform:scaleX(0.815);transform-origin:100% 0;">FOUN-L</div></div>
<div class="z" style="left:350.80px;top:313.97px;"><div class="t" style="right:0;top:0;font-size:8.3px;line-height:8.3px;color:#111;font-weight:normal;font-style:normal;transform:scaleX(0.815);transform-origin:100% 0;">143-2105</div></div>
<div class="z" style="left:417.60px;top:313.97px;"><div class="t" style="right:0;top:0;font-size:8.3px;line-height:8.3px;color:#111;font-weight:normal;font-style:normal;transform:scaleX(0.815);transform-origin:100% 0;">SITE-04-0023-6</div></div>
<div class="t" style="left:422.00px;top:313.97px;font-size:8.3px;line-height:8.3px;color:#111;font-weight:normal;font-style:normal;transform:scaleX(0.815);transform-origin:0 0;white-space:pre;">GeoTex Drive</div>
<div class="z" style="left:595.00px;top:313.97px;"><div class="t" style="right:0;top:0;font-size:8.3px;line-height:8.3px;color:#111;font-weight:normal;font-style:normal;transform:scaleX(0.815);transform-origin:100% 0;">GeoTex/2002</div></div>
<div class="z" style="left:698.30px;top:313.97px;"><div class="t" style="right:0;top:0;font-size:8.3px;line-height:8.3px;color:#111;font-weight:normal;font-style:normal;transform:scaleX(0.815);transform-origin:100% 0;">1</div></div>
<div class="t" style="left:702.70px;top:313.97px;font-size:8.3px;line-height:8.3px;color:#111;font-weight:normal;font-style:normal;transform:scaleX(0.815);transform-origin:0 0;">ROLL</div>
<div class="z" style="left:782.50px;top:313.97px;"><div class="t" style="right:0;top:0;font-size:8.3px;line-height:8.3px;color:#111;font-weight:normal;font-style:normal;transform:scaleX(0.815);transform-origin:100% 0;">40.00</div></div>
<div class="z" style="left:824.10px;top:313.97px;"><div class="t" style="right:0;top:0;font-size:8.3px;line-height:8.3px;color:#111;font-weight:normal;font-style:normal;transform:scaleX(0.815);transform-origin:100% 0;">20.00</div></div>
<div class="r" style="left:866.6px;top:321px;width:4.8px;height:1px;background:#444;"></div>
<div class="z" style="left:916.40px;top:313.97px;"><div class="t" style="right:0;top:0;font-size:8.3px;line-height:8.3px;color:#111;font-weight:normal;font-style:normal;transform:scaleX(0.815);transform-origin:100% 0;">60.00</div></div>
<div class="z" style="left:297.00px;top:323.07px;"><div class="t" style="right:0;top:0;font-size:8.3px;line-height:8.3px;color:#111;font-weight:normal;font-style:normal;transform:scaleX(0.815);transform-origin:100% 0;">GRAV</div></div>
<div class="z" style="left:350.80px;top:323.07px;"><div class="t" style="right:0;top:0;font-size:8.3px;line-height:8.3px;color:#111;font-weight:normal;font-style:normal;transform:scaleX(0.815);transform-origin:100% 0;">143-1225</div></div>
<div class="z" style="left:417.60px;top:323.07px;"><div class="t" style="right:0;top:0;font-size:8.3px;line-height:8.3px;color:#111;font-weight:normal;font-style:normal;transform:scaleX(0.815);transform-origin:100% 0;">SITE-01-0001-4</div></div>
<div class="t" style="left:422.00px;top:323.07px;font-size:8.3px;line-height:8.3px;color:#111;font-weight:normal;font-style:normal;transform:scaleX(0.815);transform-origin:0 0;white-space:pre;">Gravel Driveway</div>
<div class="z" style="left:595.00px;top:323.07px;"><div class="t" style="right:0;top:0;font-size:8.3px;line-height:8.3px;color:#111;font-weight:normal;font-style:normal;transform:scaleX(0.815);transform-origin:100% 0;">#4Crushed Stone</div></div>
<div class="z" style="left:698.30px;top:323.07px;"><div class="t" style="right:0;top:0;font-size:8.3px;line-height:8.3px;color:#111;font-weight:normal;font-style:normal;transform:scaleX(0.815);transform-origin:100% 0;">9</div></div>
<div class="t" style="left:702.70px;top:323.07px;font-size:8.3px;line-height:8.3px;color:#111;font-weight:normal;font-style:normal;transform:scaleX(0.815);transform-origin:0 0;">TON</div>
<div class="z" style="left:782.50px;top:323.07px;"><div class="t" style="right:0;top:0;font-size:8.3px;line-height:8.3px;color:#111;font-weight:normal;font-style:normal;transform:scaleX(0.815);transform-origin:100% 0;">12.63</div></div>
<div class="r" style="left:819.3px;top:330px;width:4.8px;height:1px;background:#444;"></div>
<div class="z" style="left:871.40px;top:323.07px;"><div class="t" style="right:0;top:0;font-size:8.3px;line-height:8.3px;color:#111;font-weight:normal;font-style:normal;transform:scaleX(0.815);transform-origin:100% 0;">7.95</div></div>
<div class="z" style="left:916.40px;top:323.07px;"><div class="t" style="right:0;top:0;font-size:8.3px;line-height:8.3px;color:#111;font-weight:normal;font-style:normal;transform:scaleX(0.815);transform-origin:100% 0;">121.62</div></div>
<div class="z" style="left:297.00px;top:332.17px;"><div class="t" style="right:0;top:0;font-size:8.3px;line-height:8.3px;color:#111;font-weight:normal;font-style:normal;transform:scaleX(0.815);transform-origin:100% 0;">GRAD-R</div></div>
<div class="z" style="left:350.80px;top:332.17px;"><div class="t" style="right:0;top:0;font-size:8.3px;line-height:8.3px;color:#111;font-weight:normal;font-style:normal;transform:scaleX(0.815);transform-origin:100% 0;">143-1230</div></div>
<div class="z" style="left:417.60px;top:332.17px;"><div class="t" style="right:0;top:0;font-size:8.3px;line-height:8.3px;color:#111;font-weight:normal;font-style:normal;transform:scaleX(0.815);transform-origin:100% 0;">BS-0102-R</div></div>
<div class="t" style="left:422.00px;top:332.17px;font-size:8.3px;line-height:8.3px;color:#111;font-weight:normal;font-style:normal;transform:scaleX(0.815);transform-origin:0 0;white-space:pre;">Grading Rough</div>
<div class="z" style="left:595.00px;top:332.17px;"><div class="t" style="right:0;top:0;font-size:8.3px;line-height:8.3px;color:#111;font-weight:normal;font-style:normal;transform:scaleX(0.815);transform-origin:100% 0;">Clear &amp; Grade Lot</div></div>
<div class="z" style="left:698.30px;top:332.17px;"><div class="t" style="right:0;top:0;font-size:8.3px;line-height:8.3px;color:#111;font-weight:normal;font-style:normal;transform:scaleX(0.815);transform-origin:100% 0;">1</div></div>
<div class="t" style="left:702.70px;top:332.17px;font-size:8.3px;line-height:8.3px;color:#111;font-weight:normal;font-style:normal;transform:scaleX(0.815);transform-origin:0 0;">EACH</div>
<div class="z" style="left:782.50px;top:332.17px;"><div class="t" style="right:0;top:0;font-size:8.3px;line-height:8.3px;color:#111;font-weight:normal;font-style:normal;transform:scaleX(0.815);transform-origin:100% 0;">600.00</div></div>
<div class="r" style="left:819.3px;top:339px;width:4.8px;height:1px;background:#444;"></div>
<div class="r" style="left:866.6px;top:339px;width:4.8px;height:1px;background:#444;"></div>
<div class="z" style="left:916.40px;top:332.17px;"><div class="t" style="right:0;top:0;font-size:8.3px;line-height:8.3px;color:#111;font-weight:normal;font-style:normal;transform:scaleX(0.815);transform-origin:100% 0;">600.00</div></div>
<div class="z" style="left:297.00px;top:341.27px;"><div class="t" style="right:0;top:0;font-size:8.3px;line-height:8.3px;color:#111;font-weight:normal;font-style:normal;transform:scaleX(0.815);transform-origin:100% 0;">UTIL-C</div></div>
<div class="z" style="left:350.80px;top:341.27px;"><div class="t" style="right:0;top:0;font-size:8.3px;line-height:8.3px;color:#111;font-weight:normal;font-style:normal;transform:scaleX(0.815);transform-origin:100% 0;">143-1410</div></div>
<div class="z" style="left:417.60px;top:341.27px;"><div class="t" style="right:0;top:0;font-size:8.3px;line-height:8.3px;color:#111;font-weight:normal;font-style:normal;transform:scaleX(0.815);transform-origin:100% 0;">BS-0075</div></div>
<div class="t" style="left:422.00px;top:341.27px;font-size:8.3px;line-height:8.3px;color:#111;font-weight:normal;font-style:normal;transform:scaleX(0.815);transform-origin:0 0;white-space:pre;">Temporary Electric</div>
<div class="z" style="left:595.00px;top:341.27px;"><div class="t" style="right:0;top:0;font-size:8.3px;line-height:8.3px;color:#111;font-weight:normal;font-style:normal;transform:scaleX(0.815);transform-origin:100% 0;">Connect to PwrPole</div></div>
<div class="z" style="left:698.30px;top:341.27px;"><div class="t" style="right:0;top:0;font-size:8.3px;line-height:8.3px;color:#111;font-weight:normal;font-style:normal;transform:scaleX(0.815);transform-origin:100% 0;">1</div></div>
<div class="t" style="left:702.70px;top:341.27px;font-size:8.3px;line-height:8.3px;color:#111;font-weight:normal;font-style:normal;transform:scaleX(0.815);transform-origin:0 0;">EACH</div>
<div class="z" style="left:782.50px;top:341.27px;"><div class="t" style="right:0;top:0;font-size:8.3px;line-height:8.3px;color:#111;font-weight:normal;font-style:normal;transform:scaleX(0.815);transform-origin:100% 0;">50.00</div></div>
<div class="r" style="left:819.3px;top:348px;width:4.8px;height:1px;background:#444;"></div>
<div class="r" style="left:866.6px;top:348px;width:4.8px;height:1px;background:#444;"></div>
<div class="z" style="left:916.40px;top:341.27px;"><div class="t" style="right:0;top:0;font-size:8.3px;line-height:8.3px;color:#111;font-weight:normal;font-style:normal;transform:scaleX(0.815);transform-origin:100% 0;">50.00</div></div>
<div class="z" style="left:297.00px;top:350.37px;"><div class="t" style="right:0;top:0;font-size:8.3px;line-height:8.3px;color:#111;font-weight:normal;font-style:normal;transform:scaleX(0.815);transform-origin:100% 0;">FEES</div></div>
<div class="z" style="left:350.80px;top:350.37px;"><div class="t" style="right:0;top:0;font-size:8.3px;line-height:8.3px;color:#111;font-weight:normal;font-style:normal;transform:scaleX(0.815);transform-origin:100% 0;">143-1430</div></div>
<div class="z" style="left:417.60px;top:350.37px;"><div class="t" style="right:0;top:0;font-size:8.3px;line-height:8.3px;color:#111;font-weight:normal;font-style:normal;transform:scaleX(0.815);transform-origin:100% 0;">BS-0070</div></div>
<div class="t" style="left:422.00px;top:350.37px;font-size:8.3px;line-height:8.3px;color:#111;font-weight:normal;font-style:normal;transform:scaleX(0.815);transform-origin:0 0;white-space:pre;">Water Service   (Permit)</div>
<div class="z" style="left:595.00px;top:350.37px;"><div class="t" style="right:0;top:0;font-size:8.3px;line-height:8.3px;color:#111;font-weight:normal;font-style:normal;transform:scaleX(0.815);transform-origin:100% 0;">Dekalb Co.</div></div>
<div class="z" style="left:698.30px;top:350.37px;"><div class="t" style="right:0;top:0;font-size:8.3px;line-height:8.3px;color:#111;font-weight:normal;font-style:normal;transform:scaleX(0.815);transform-origin:100% 0;">1</div></div>
<div class="t" style="left:702.70px;top:350.37px;font-size:8.3px;line-height:8.3px;color:#111;font-weight:normal;font-style:normal;transform:scaleX(0.815);transform-origin:0 0;">EACH</div>
<div class="z" style="left:782.50px;top:350.37px;"><div class="t" style="right:0;top:0;font-size:8.3px;line-height:8.3px;color:#111;font-weight:normal;font-style:normal;transform:scaleX(0.815);transform-origin:100% 0;">850.00</div></div>
<div class="r" style="left:819.3px;top:358px;width:4.8px;height:1px;background:#444;"></div>
<div class="r" style="left:866.6px;top:358px;width:4.8px;height:1px;background:#444;"></div>
<div class="z" style="left:916.40px;top:350.37px;"><div class="t" style="right:0;top:0;font-size:8.3px;line-height:8.3px;color:#111;font-weight:normal;font-style:normal;transform:scaleX(0.815);transform-origin:100% 0;">850.00</div></div>
<div class="z" style="left:297.00px;top:359.47px;"><div class="t" style="right:0;top:0;font-size:8.3px;line-height:8.3px;color:#111;font-weight:normal;font-style:normal;transform:scaleX(0.815);transform-origin:100% 0;">FEES</div></div>
<div class="z" style="left:350.80px;top:359.47px;"><div class="t" style="right:0;top:0;font-size:8.3px;line-height:8.3px;color:#111;font-weight:normal;font-style:normal;transform:scaleX(0.815);transform-origin:100% 0;">143-1450</div></div>
<div class="z" style="left:417.60px;top:359.47px;"><div class="t" style="right:0;top:0;font-size:8.3px;line-height:8.3px;color:#111;font-weight:normal;font-style:normal;transform:scaleX(0.815);transform-origin:100% 0;">BS-0070</div></div>
<div class="t" style="left:422.00px;top:359.47px;font-size:8.3px;line-height:8.3px;color:#111;font-weight:normal;font-style:normal;transform:scaleX(0.815);transform-origin:0 0;white-space:pre;">Sewer  Service (Permit)</div>
<div class="z" style="left:595.00px;top:359.47px;"><div class="t" style="right:0;top:0;font-size:8.3px;line-height:8.3px;color:#111;font-weight:normal;font-style:normal;transform:scaleX(0.815);transform-origin:100% 0;">Dekalb Co.</div></div>
<div class="z" style="left:698.30px;top:359.47px;"><div class="t" style="right:0;top:0;font-size:8.3px;line-height:8.3px;color:#111;font-weight:normal;font-style:normal;transform:scaleX(0.815);transform-origin:100% 0;">1</div></div>
<div class="t" style="left:702.70px;top:359.47px;font-size:8.3px;line-height:8.3px;color:#111;font-weight:normal;font-style:normal;transform:scaleX(0.815);transform-origin:0 0;">EACH</div>
<div class="z" style="left:782.50px;top:359.47px;"><div class="t" style="right:0;top:0;font-size:8.3px;line-height:8.3px;color:#111;font-weight:normal;font-style:normal;transform:scaleX(0.815);transform-origin:100% 0;">650.00</div></div>
<div class="r" style="left:819.3px;top:367px;width:4.8px;height:1px;background:#444;"></div>
<div class="r" style="left:866.6px;top:367px;width:4.8px;height:1px;background:#444;"></div>
<div class="z" style="left:916.40px;top:359.47px;"><div class="t" style="right:0;top:0;font-size:8.3px;line-height:8.3px;color:#111;font-weight:normal;font-style:normal;transform:scaleX(0.815);transform-origin:100% 0;">650.00</div></div>
<div class="z" style="left:297.00px;top:368.57px;"><div class="t" style="right:0;top:0;font-size:8.3px;line-height:8.3px;color:#111;font-weight:normal;font-style:normal;transform:scaleX(0.815);transform-origin:100% 0;">FEES</div></div>
<div class="z" style="left:350.80px;top:368.57px;"><div class="t" style="right:0;top:0;font-size:8.3px;line-height:8.3px;color:#111;font-weight:normal;font-style:normal;transform:scaleX(0.815);transform-origin:100% 0;">143-1510</div></div>
<div class="z" style="left:417.60px;top:368.57px;"><div class="t" style="right:0;top:0;font-size:8.3px;line-height:8.3px;color:#111;font-weight:normal;font-style:normal;transform:scaleX(0.815);transform-origin:100% 0;">BS-0000</div></div>
<div class="t" style="left:422.00px;top:368.57px;font-size:8.3px;line-height:8.3px;color:#111;font-weight:normal;font-style:normal;transform:scaleX(0.815);transform-origin:0 0;white-space:pre;">Const Period Interest</div>
<div class="z" style="left:595.00px;top:368.57px;"><div class="t" style="right:0;top:0;font-size:8.3px;line-height:8.3px;color:#111;font-weight:normal;font-style:normal;transform:scaleX(0.815);transform-origin:100% 0;">5 Month Allowance</div></div>
<div class="z" style="left:698.30px;top:368.57px;"><div class="t" style="right:0;top:0;font-size:8.3px;line-height:8.3px;color:#111;font-weight:normal;font-style:normal;transform:scaleX(0.815);transform-origin:100% 0;">1</div></div>
<div class="t" style="left:702.70px;top:368.57px;font-size:8.3px;line-height:8.3px;color:#111;font-weight:normal;font-style:normal;transform:scaleX(0.815);transform-origin:0 0;">EACH</div>
<div class="z" style="left:782.50px;top:368.57px;"><div class="t" style="right:0;top:0;font-size:8.3px;line-height:8.3px;color:#111;font-weight:normal;font-style:normal;transform:scaleX(0.815);transform-origin:100% 0;">1800.00</div></div>
<div class="r" style="left:819.3px;top:376px;width:4.8px;height:1px;background:#444;"></div>
<div class="r" style="left:866.6px;top:376px;width:4.8px;height:1px;background:#444;"></div>
<div class="z" style="left:916.40px;top:368.57px;"><div class="t" style="right:0;top:0;font-size:8.3px;line-height:8.3px;color:#111;font-weight:normal;font-style:normal;transform:scaleX(0.815);transform-origin:100% 0;">1800.00</div></div>
<div class="z" style="left:297.00px;top:377.67px;"><div class="t" style="right:0;top:0;font-size:8.3px;line-height:8.3px;color:#111;font-weight:normal;font-style:normal;transform:scaleX(0.815);transform-origin:100% 0;">FEES</div></div>
<div class="z" style="left:350.80px;top:377.67px;"><div class="t" style="right:0;top:0;font-size:8.3px;line-height:8.3px;color:#111;font-weight:normal;font-style:normal;transform:scaleX(0.815);transform-origin:100% 0;">143-1520</div></div>
<div class="z" style="left:417.60px;top:377.67px;"><div class="t" style="right:0;top:0;font-size:8.3px;line-height:8.3px;color:#111;font-weight:normal;font-style:normal;transform:scaleX(0.815);transform-origin:100% 0;">BS-0000</div></div>
<div class="t" style="left:422.00px;top:377.67px;font-size:8.3px;line-height:8.3px;color:#111;font-weight:normal;font-style:normal;transform:scaleX(0.815);transform-origin:0 0;white-space:pre;">Closing Fees &amp; Costs</div>
<div class="z" style="left:595.00px;top:377.67px;"><div class="t" style="right:0;top:0;font-size:8.3px;line-height:8.3px;color:#111;font-weight:normal;font-style:normal;transform:scaleX(0.815);transform-origin:100% 0;">Construction Loan</div></div>
<div class="z" style="left:698.30px;top:377.67px;"><div class="t" style="right:0;top:0;font-size:8.3px;line-height:8.3px;color:#111;font-weight:normal;font-style:normal;transform:scaleX(0.815);transform-origin:100% 0;">1</div></div>
<div class="t" style="left:702.70px;top:377.67px;font-size:8.3px;line-height:8.3px;color:#111;font-weight:normal;font-style:normal;transform:scaleX(0.815);transform-origin:0 0;">EACH</div>
<div class="z" style="left:782.50px;top:377.67px;"><div class="t" style="right:0;top:0;font-size:8.3px;line-height:8.3px;color:#111;font-weight:normal;font-style:normal;transform:scaleX(0.815);transform-origin:100% 0;">1600.00</div></div>
<div class="r" style="left:819.3px;top:385px;width:4.8px;height:1px;background:#444;"></div>
<div class="r" style="left:866.6px;top:385px;width:4.8px;height:1px;background:#444;"></div>
<div class="z" style="left:916.40px;top:377.67px;"><div class="t" style="right:0;top:0;font-size:8.3px;line-height:8.3px;color:#111;font-weight:normal;font-style:normal;transform:scaleX(0.815);transform-origin:100% 0;">1600.00</div></div>
<div class="z" style="left:297.00px;top:386.77px;"><div class="t" style="right:0;top:0;font-size:8.3px;line-height:8.3px;color:#111;font-weight:normal;font-style:normal;transform:scaleX(0.815);transform-origin:100% 0;">FEES</div></div>
<div class="z" style="left:350.80px;top:386.77px;"><div class="t" style="right:0;top:0;font-size:8.3px;line-height:8.3px;color:#111;font-weight:normal;font-style:normal;transform:scaleX(0.815);transform-origin:100% 0;">143-1530</div></div>
<div class="z" style="left:417.60px;top:386.77px;"><div class="t" style="right:0;top:0;font-size:8.3px;line-height:8.3px;color:#111;font-weight:normal;font-style:normal;transform:scaleX(0.815);transform-origin:100% 0;">BS-0000</div></div>
<div class="t" style="left:422.00px;top:386.77px;font-size:8.3px;line-height:8.3px;color:#111;font-weight:normal;font-style:normal;transform:scaleX(0.815);transform-origin:0 0;white-space:pre;">Appraisal (Const Loan)</div>
<div class="z" style="left:595.00px;top:386.77px;"><div class="t" style="right:0;top:0;font-size:8.3px;line-height:8.3px;color:#111;font-weight:normal;font-style:normal;transform:scaleX(0.815);transform-origin:100% 0;">Construction Loan</div></div>
<div class="z" style="left:698.30px;top:386.77px;"><div class="t" style="right:0;top:0;font-size:8.3px;line-height:8.3px;color:#111;font-weight:normal;font-style:normal;transform:scaleX(0.815);transform-origin:100% 0;">1</div></div>
<div class="t" style="left:702.70px;top:386.77px;font-size:8.3px;line-height:8.3px;color:#111;font-weight:normal;font-style:normal;transform:scaleX(0.815);transform-origin:0 0;">EACH</div>
<div class="z" style="left:782.50px;top:386.77px;"><div class="t" style="right:0;top:0;font-size:8.3px;line-height:8.3px;color:#111;font-weight:normal;font-style:normal;transform:scaleX(0.815);transform-origin:100% 0;">200.00</div></div>
<div class="r" style="left:819.3px;top:394px;width:4.8px;height:1px;background:#444;"></div>
<div class="r" style="left:866.6px;top:394px;width:4.8px;height:1px;background:#444;"></div>
<div class="z" style="left:916.40px;top:386.77px;"><div class="t" style="right:0;top:0;font-size:8.3px;line-height:8.3px;color:#111;font-weight:normal;font-style:normal;transform:scaleX(0.815);transform-origin:100% 0;">200.00</div></div>
<div class="z" style="left:297.00px;top:395.87px;"><div class="t" style="right:0;top:0;font-size:8.3px;line-height:8.3px;color:#111;font-weight:normal;font-style:normal;transform:scaleX(0.815);transform-origin:100% 0;">FEES</div></div>
<div class="z" style="left:350.80px;top:395.87px;"><div class="t" style="right:0;top:0;font-size:8.3px;line-height:8.3px;color:#111;font-weight:normal;font-style:normal;transform:scaleX(0.815);transform-origin:100% 0;">143-1540</div></div>
<div class="z" style="left:417.60px;top:395.87px;"><div class="t" style="right:0;top:0;font-size:8.3px;line-height:8.3px;color:#111;font-weight:normal;font-style:normal;transform:scaleX(0.815);transform-origin:100% 0;">BS-0000</div></div>
<div class="t" style="left:422.00px;top:395.87px;font-size:8.3px;line-height:8.3px;color:#111;font-weight:normal;font-style:normal;transform:scaleX(0.815);transform-origin:0 0;white-space:pre;">Taxes During Const</div>
<div class="z" style="left:595.00px;top:395.87px;"><div class="t" style="right:0;top:0;font-size:8.3px;line-height:8.3px;color:#111;font-weight:normal;font-style:normal;transform:scaleX(0.815);transform-origin:100% 0;">Property Taxes</div></div>
<div class="z" style="left:698.30px;top:395.87px;"><div class="t" style="right:0;top:0;font-size:8.3px;line-height:8.3px;color:#111;font-weight:normal;font-style:normal;transform:scaleX(0.815);transform-origin:100% 0;">1</div></div>
<div class="t" style="left:702.70px;top:395.87px;font-size:8.3px;line-height:8.3px;color:#111;font-weight:normal;font-style:normal;transform:scaleX(0.815);transform-origin:0 0;">EACH</div>
<div class="z" style="left:782.50px;top:395.87px;"><div class="t" style="right:0;top:0;font-size:8.3px;line-height:8.3px;color:#111;font-weight:normal;font-style:normal;transform:scaleX(0.815);transform-origin:100% 0;">150.00</div></div>
<div class="r" style="left:819.3px;top:403px;width:4.8px;height:1px;background:#444;"></div>
<div class="r" style="left:866.6px;top:403px;width:4.8px;height:1px;background:#444;"></div>
<div class="z" style="left:916.40px;top:395.87px;"><div class="t" style="right:0;top:0;font-size:8.3px;line-height:8.3px;color:#111;font-weight:normal;font-style:normal;transform:scaleX(0.815);transform-origin:100% 0;">150.00</div></div>
<div class="z" style="left:297.00px;top:404.97px;"><div class="t" style="right:0;top:0;font-size:8.3px;line-height:8.3px;color:#111;font-weight:normal;font-style:normal;transform:scaleX(0.815);transform-origin:100% 0;">FEES</div></div>
<div class="z" style="left:350.80px;top:404.97px;"><div class="t" style="right:0;top:0;font-size:8.3px;line-height:8.3px;color:#111;font-weight:normal;font-style:normal;transform:scaleX(0.815);transform-origin:100% 0;">143-1650</div></div>
<div class="z" style="left:417.60px;top:404.97px;"><div class="t" style="right:0;top:0;font-size:8.3px;line-height:8.3px;color:#111;font-weight:normal;font-style:normal;transform:scaleX(0.815);transform-origin:100% 0;">BS-0000</div></div>
<div class="t" style="left:422.00px;top:404.97px;font-size:8.3px;line-height:8.3px;color:#111;font-weight:normal;font-style:normal;transform:scaleX(0.815);transform-origin:0 0;white-space:pre;">Builders Risk Insurance</div>
<div class="z" style="left:595.00px;top:404.97px;"><div class="t" style="right:0;top:0;font-size:8.3px;line-height:8.3px;color:#111;font-weight:normal;font-style:normal;transform:scaleX(0.815);transform-origin:100% 0;">General Liability</div></div>
<div class="z" style="left:698.30px;top:404.97px;"><div class="t" style="right:0;top:0;font-size:8.3px;line-height:8.3px;color:#111;font-weight:normal;font-style:normal;transform:scaleX(0.815);transform-origin:100% 0;">1</div></div>
<div class="t" style="left:702.70px;top:404.97px;font-size:8.3px;line-height:8.3px;color:#111;font-weight:normal;font-style:normal;transform:scaleX(0.815);transform-origin:0 0;">EACH</div>
<div class="z" style="left:782.50px;top:404.97px;"><div class="t" style="right:0;top:0;font-size:8.3px;line-height:8.3px;color:#111;font-weight:normal;font-style:normal;transform:scaleX(0.815);transform-origin:100% 0;">200.00</div></div>
<div class="r" style="left:819.3px;top:412px;width:4.8px;height:1px;background:#444;"></div>
<div class="r" style="left:866.6px;top:412px;width:4.8px;height:1px;background:#444;"></div>
<div class="z" style="left:916.40px;top:404.97px;"><div class="t" style="right:0;top:0;font-size:8.3px;line-height:8.3px;color:#111;font-weight:normal;font-style:normal;transform:scaleX(0.815);transform-origin:100% 0;">200.00</div></div>
<div class="t" style="left:422.00px;top:414.07px;font-size:8.3px;line-height:8.3px;color:#111;font-weight:normal;font-style:normal;transform:scaleX(0.815);transform-origin:0 0;">SUBTOTAL</div>
<div class="z" style="left:916.40px;top:414.07px;"><div class="t" style="right:0;top:0;font-size:8.3px;line-height:8.3px;color:#111;font-weight:normal;font-style:normal;transform:scaleX(0.815);transform-origin:100% 0;">8444.62</div></div>
<div class="t" style="left:422.00px;top:432.27px;font-size:8.3px;line-height:8.3px;color:#111;font-weight:normal;font-style:normal;transform:scaleX(0.815);transform-origin:0 0;">20000-29999 Ex/FOUNDATIO</div>
<div class="t" style="left:422.00px;top:440.67px;font-size:8.3px;line-height:8.3px;color:#111;font-weight:normal;font-style:normal;transform:scaleX(0.81);transform-origin:0 0;">****************************</div>
<div class="z" style="left:297.00px;top:450.47px;"><div class="t" style="right:0;top:0;font-size:8.3px;line-height:8.3px;color:#111;font-weight:normal;font-style:normal;transform:scaleX(0.815);transform-origin:100% 0;">GRAD-B</div></div>
<div class="z" style="left:350.80px;top:450.47px;"><div class="t" style="right:0;top:0;font-size:8.3px;line-height:8.3px;color:#111;font-weight:normal;font-style:normal;transform:scaleX(0.815);transform-origin:100% 0;">143-2006</div></div>
<div class="z" style="left:417.60px;top:450.47px;"><div class="t" style="right:0;top:0;font-size:8.3px;line-height:8.3px;color:#111;font-weight:normal;font-style:normal;transform:scaleX(0.815);transform-origin:100% 0;">BS-0102-B</div></div>
<div class="t" style="left:422.00px;top:450.47px;font-size:8.3px;line-height:8.3px;color:#111;font-weight:normal;font-style:normal;transform:scaleX(0.815);transform-origin:0 0;white-space:pre;">Backfill</div>
<div class="z" style="left:595.00px;top:450.47px;"><div class="t" style="right:0;top:0;font-size:8.3px;line-height:8.3px;color:#111;font-weight:normal;font-style:normal;transform:scaleX(0.815);transform-origin:100% 0;">SlabBox or Bs'mtWall</div></div>
<div class="z" style="left:698.30px;top:450.47px;"><div class="t" style="right:0;top:0;font-size:8.3px;line-height:8.3px;color:#111;font-weight:normal;font-style:normal;transform:scaleX(0.815);transform-origin:100% 0;">1</div></div>
<div class="t" style="left:702.70px;top:450.47px;font-size:8.3px;line-height:8.3px;color:#111;font-weight:normal;font-style:normal;transform:scaleX(0.815);transform-origin:0 0;">EACH</div>
<div class="z" style="left:782.50px;top:450.47px;"><div class="t" style="right:0;top:0;font-size:8.3px;line-height:8.3px;color:#111;font-weight:normal;font-style:normal;transform:scaleX(0.815);transform-origin:100% 0;">100.00</div></div>
<div class="r" style="left:819.3px;top:458px;width:4.8px;height:1px;background:#444;"></div>
<div class="r" style="left:866.6px;top:458px;width:4.8px;height:1px;background:#444;"></div>
<div class="z" style="left:916.40px;top:450.47px;"><div class="t" style="right:0;top:0;font-size:8.3px;line-height:8.3px;color:#111;font-weight:normal;font-style:normal;transform:scaleX(0.815);transform-origin:100% 0;">100.00</div></div>
<div class="z" style="left:297.00px;top:459.57px;"><div class="t" style="right:0;top:0;font-size:8.3px;line-height:8.3px;color:#111;font-weight:normal;font-style:normal;transform:scaleX(0.815);transform-origin:100% 0;">FOUN-L</div></div>
<div class="z" style="left:350.80px;top:459.57px;"><div class="t" style="right:0;top:0;font-size:8.3px;line-height:8.3px;color:#111;font-weight:normal;font-style:normal;transform:scaleX(0.815);transform-origin:100% 0;">143-2105</div></div>
<div class="z" style="left:417.60px;top:459.57px;"><div class="t" style="right:0;top:0;font-size:8.3px;line-height:8.3px;color:#111;font-weight:normal;font-style:normal;transform:scaleX(0.815);transform-origin:100% 0;">MET-03-0001</div></div>
<div class="t" style="left:422.00px;top:459.57px;font-size:8.3px;line-height:8.3px;color:#111;font-weight:normal;font-style:normal;transform:scaleX(0.815);transform-origin:0 0;white-space:pre;">Wire Mesh (Slab)</div>
<div class="z" style="left:589.00px;top:459.57px;"><div class="t" style="right:0;top:0;font-size:8.3px;line-height:8.3px;color:#111;font-weight:normal;font-style:normal;transform:scaleX(0.815);transform-origin:100% 0;">66REWIRE</div></div>
<div class="z" style="left:698.30px;top:459.57px;"><div class="t" style="right:0;top:0;font-size:8.3px;line-height:8.3px;color:#111;font-weight:normal;font-style:normal;transform:scaleX(0.815);transform-origin:100% 0;">2</div></div>
<div class="t" style="left:702.70px;top:459.57px;font-size:8.3px;line-height:8.3px;color:#111;font-weight:normal;font-style:normal;transform:scaleX(0.815);transform-origin:0 0;">ROLL</div>
<div class="z" style="left:782.50px;top:459.57px;"><div class="t" style="right:0;top:0;font-size:8.3px;line-height:8.3px;color:#111;font-weight:normal;font-style:normal;transform:scaleX(0.815);transform-origin:100% 0;">0.06</div></div>
<div class="r" style="left:819.3px;top:467px;width:4.8px;height:1px;background:#444;"></div>
<div class="r" style="left:866.6px;top:467px;width:4.8px;height:1px;background:#444;"></div>
<div class="z" style="left:916.40px;top:459.57px;"><div class="t" style="right:0;top:0;font-size:8.3px;line-height:8.3px;color:#111;font-weight:normal;font-style:normal;transform:scaleX(0.815);transform-origin:100% 0;">0.12</div></div>
<div class="z" style="left:297.00px;top:468.67px;"><div class="t" style="right:0;top:0;font-size:8.3px;line-height:8.3px;color:#111;font-weight:normal;font-style:normal;transform:scaleX(0.815);transform-origin:100% 0;">FOUN-P</div></div>
<div class="z" style="left:350.80px;top:468.67px;"><div class="t" style="right:0;top:0;font-size:8.3px;line-height:8.3px;color:#111;font-weight:normal;font-style:normal;transform:scaleX(0.815);transform-origin:100% 0;">143-2105</div></div>
<div class="z" style="left:417.60px;top:468.67px;"><div class="t" style="right:0;top:0;font-size:8.3px;line-height:8.3px;color:#111;font-weight:normal;font-style:normal;transform:scaleX(0.815);transform-origin:100% 0;">MET-03-00024-10</div></div>
<div class="t" style="left:422.00px;top:468.67px;font-size:8.3px;line-height:8.3px;color:#111;font-weight:normal;font-style:normal;transform:scaleX(0.815);transform-origin:0 0;white-space:pre;">Rebar (Footings)</div>
<div class="z" style="left:595.00px;top:468.67px;"><div class="t" style="right:0;top:0;font-size:8.3px;line-height:8.3px;color:#111;font-weight:normal;font-style:normal;transform:scaleX(0.815);transform-origin:100% 0;">#4-1220REBAR</div></div>
<div class="z" style="left:698.30px;top:468.67px;"><div class="t" style="right:0;top:0;font-size:8.3px;line-height:8.3px;color:#111;font-weight:normal;font-style:normal;transform:scaleX(0.815);transform-origin:100% 0;">25</div></div>
<div class="t" style="left:702.70px;top:468.67px;font-size:8.3px;line-height:8.3px;color:#111;font-weight:normal;font-style:normal;transform:scaleX(0.815);transform-origin:0 0;">PCS</div>
<div class="z" style="left:782.50px;top:468.67px;"><div class="t" style="right:0;top:0;font-size:8.3px;line-height:8.3px;color:#111;font-weight:normal;font-style:normal;transform:scaleX(0.815);transform-origin:100% 0;">3.20</div></div>
<div class="r" style="left:819.3px;top:476px;width:4.8px;height:1px;background:#444;"></div>
<div class="z" style="left:871.40px;top:468.67px;"><div class="t" style="right:0;top:0;font-size:8.3px;line-height:8.3px;color:#111;font-weight:normal;font-style:normal;transform:scaleX(0.815);transform-origin:100% 0;">5.60</div></div>
<div class="z" style="left:916.40px;top:468.67px;"><div class="t" style="right:0;top:0;font-size:8.3px;line-height:8.3px;color:#111;font-weight:normal;font-style:normal;transform:scaleX(0.815);transform-origin:100% 0;">85.60</div></div>
<div class="z" style="left:297.00px;top:477.77px;"><div class="t" style="right:0;top:0;font-size:8.3px;line-height:8.3px;color:#111;font-weight:normal;font-style:normal;transform:scaleX(0.815);transform-origin:100% 0;">FOUN-P</div></div>
<div class="z" style="left:350.80px;top:477.77px;"><div class="t" style="right:0;top:0;font-size:8.3px;line-height:8.3px;color:#111;font-weight:normal;font-style:normal;transform:scaleX(0.815);transform-origin:100% 0;">143-2105</div></div>
<div class="z" style="left:417.60px;top:477.77px;"><div class="t" style="right:0;top:0;font-size:8.3px;line-height:8.3px;color:#111;font-weight:normal;font-style:normal;transform:scaleX(0.815);transform-origin:100% 0;">MET-03-0000</div></div>
<div class="t" style="left:422.00px;top:477.77px;font-size:8.3px;line-height:8.3px;color:#111;font-weight:normal;font-style:normal;transform:scaleX(0.815);transform-origin:0 0;white-space:pre;">Rebar (Wall)</div>
<div class="z" style="left:595.00px;top:477.77px;"><div class="t" style="right:0;top:0;font-size:8.3px;line-height:8.3px;color:#111;font-weight:normal;font-style:normal;transform:scaleX(0.815);transform-origin:100% 0;">Varies</div></div>
<div class="z" style="left:698.30px;top:477.77px;"><div class="t" style="right:0;top:0;font-size:8.3px;line-height:8.3px;color:#111;font-weight:normal;font-style:normal;transform:scaleX(0.815);transform-origin:100% 0;">5</div></div>
<div class="t" style="left:702.70px;top:477.77px;font-size:8.3px;line-height:8.3px;color:#111;font-weight:normal;font-style:normal;transform:scaleX(0.815);transform-origin:0 0;">PCS</div>
<div class="z" style="left:782.50px;top:477.77px;"><div class="t" style="right:0;top:0;font-size:8.3px;line-height:8.3px;color:#111;font-weight:normal;font-style:normal;transform:scaleX(0.815);transform-origin:100% 0;">0.16</div></div>
<div class="r" style="left:819.3px;top:485px;width:4.8px;height:1px;background:#444;"></div>
<div class="z" style="left:871.40px;top:477.77px;"><div class="t" style="right:0;top:0;font-size:8.3px;line-height:8.3px;color:#111;font-weight:normal;font-style:normal;transform:scaleX(0.815);transform-origin:100% 0;">0.05</div></div>
<div class="z" style="left:916.40px;top:477.77px;"><div class="t" style="right:0;top:0;font-size:8.3px;line-height:8.3px;color:#111;font-weight:normal;font-style:normal;transform:scaleX(0.815);transform-origin:100% 0;">0.85</div></div>
<div class="z" style="left:297.00px;top:486.87px;"><div class="t" style="right:0;top:0;font-size:8.3px;line-height:8.3px;color:#111;font-weight:normal;font-style:normal;transform:scaleX(0.815);transform-origin:100% 0;">FOUN-P</div></div>
<div class="z" style="left:350.80px;top:486.87px;"><div class="t" style="right:0;top:0;font-size:8.3px;line-height:8.3px;color:#111;font-weight:normal;font-style:normal;transform:scaleX(0.815);transform-origin:100% 0;">143-2105</div></div>
<div class="z" style="left:417.60px;top:486.87px;"><div class="t" style="right:0;top:0;font-size:8.3px;line-height:8.3px;color:#111;font-weight:normal;font-style:normal;transform:scaleX(0.815);transform-origin:100% 0;">T&amp;M-07-0007-10</div></div>
<div class="t" style="left:422.00px;top:486.87px;font-size:8.3px;line-height:8.3px;color:#111;font-weight:normal;font-style:normal;transform:scaleX(0.815);transform-origin:0 0;white-space:pre;">Weep Tile/Fnd Drain Tile</div>
<div class="z" style="left:595.00px;top:486.87px;"><div class="t" style="right:0;top:0;font-size:8.3px;line-height:8.3px;color:#111;font-weight:normal;font-style:normal;transform:scaleX(0.815);transform-origin:100% 0;">410SOLID</div></div>
<div class="z" style="left:698.30px;top:486.87px;"><div class="t" style="right:0;top:0;font-size:8.3px;line-height:8.3px;color:#111;font-weight:normal;font-style:normal;transform:scaleX(0.815);transform-origin:100% 0;">265</div></div>
<div class="t" style="left:702.70px;top:486.87px;font-size:8.3px;line-height:8.3px;color:#111;font-weight:normal;font-style:normal;transform:scaleX(0.815);transform-origin:0 0;">FEET</div>
<div class="r" style="left:777.7px;top:494px;width:4.8px;height:1px;background:#444;"></div>
<div class="r" style="left:819.3px;top:494px;width:4.8px;height:1px;background:#444;"></div>
<div class="r" style="left:866.6px;top:494px;width:4.8px;height:1px;background:#444;"></div>
<div class="r" style="left:911.6px;top:494px;width:4.8px;height:1px;background:#444;"></div>
<div class="t" style="left:422.00px;top:495.97px;font-size:8.3px;line-height:8.3px;color:#111;font-weight:normal;font-style:normal;transform:scaleX(0.815);transform-origin:0 0;white-space:pre;">Stone (Slab)</div>
<div class="z" style="left:698.30px;top:495.97px;"><div class="t" style="right:0;top:0;font-size:8.3px;line-height:8.3px;color:#111;font-weight:normal;font-style:normal;transform:scaleX(0.815);transform-origin:100% 0;">28</div></div>
<div class="t" style="left:702.70px;top:495.97px;font-size:8.3px;line-height:8.3px;color:#111;font-weight:normal;font-style:normal;transform:scaleX(0.815);transform-origin:0 0;">CUYD</div>
<div class="r" style="left:777.7px;top:503px;width:4.8px;height:1px;background:#444;"></div>
<div class="r" style="left:819.3px;top:503px;width:4.8px;height:1px;background:#444;"></div>
<div class="r" style="left:866.6px;top:503px;width:4.8px;height:1px;background:#444;"></div>
<div class="r" style="left:911.6px;top:503px;width:4.8px;height:1px;background:#444;"></div>
<div class="z" style="left:297.00px;top:505.07px;"><div class="t" style="right:0;top:0;font-size:8.3px;line-height:8.3px;color:#111;font-weight:normal;font-style:normal;transform:scaleX(0.815);transform-origin:100% 0;">FOUN-L</div></div>
<div class="z" style="left:350.80px;top:505.07px;"><div class="t" style="right:0;top:0;font-size:8.3px;line-height:8.3px;color:#111;font-weight:normal;font-style:normal;transform:scaleX(0.815);transform-origin:100% 0;">143-2105</div></div>
<div class="z" style="left:417.60px;top:505.07px;"><div class="t" style="right:0;top:0;font-size:8.3px;line-height:8.3px;color:#111;font-weight:normal;font-style:normal;transform:scaleX(0.815);transform-origin:100% 0;">GEN-01-CC165</div></div>
<div class="t" style="left:422.00px;top:505.07px;font-size:8.3px;line-height:8.3px;color:#111;font-weight:normal;font-style:normal;transform:scaleX(0.815);transform-origin:0 0;white-space:pre;">Foundation Form Nails</div>
<div class="z" style="left:595.00px;top:505.07px;"><div class="t" style="right:0;top:0;font-size:8.3px;line-height:8.3px;color:#111;font-weight:normal;font-style:normal;transform:scaleX(0.815);transform-origin:100% 0;">16D</div></div>
<div class="z" style="left:698.30px;top:505.07px;"><div class="t" style="right:0;top:0;font-size:8.3px;line-height:8.3px;color:#111;font-weight:normal;font-style:normal;transform:scaleX(0.815);transform-origin:100% 0;">5</div></div>
<div class="t" style="left:702.70px;top:505.07px;font-size:8.3px;line-height:8.3px;color:#111;font-weight:normal;font-style:normal;transform:scaleX(0.815);transform-origin:0 0;">POUNDS</div>
<div class="z" style="left:782.50px;top:505.07px;"><div class="t" style="right:0;top:0;font-size:8.3px;line-height:8.3px;color:#111;font-weight:normal;font-style:normal;transform:scaleX(0.815);transform-origin:100% 0;">1.00</div></div>
<div class="r" style="left:819.3px;top:512px;width:4.8px;height:1px;background:#444;"></div>
<div class="z" style="left:871.40px;top:505.07px;"><div class="t" style="right:0;top:0;font-size:8.3px;line-height:8.3px;color:#111;font-weight:normal;font-style:normal;transform:scaleX(0.815);transform-origin:100% 0;">0.35</div></div>
<div class="z" style="left:916.40px;top:505.07px;"><div class="t" style="right:0;top:0;font-size:8.3px;line-height:8.3px;color:#111;font-weight:normal;font-style:normal;transform:scaleX(0.815);transform-origin:100% 0;">5.35</div></div>
<div class="z" style="left:297.00px;top:514.17px;"><div class="t" style="right:0;top:0;font-size:8.3px;line-height:8.3px;color:#111;font-weight:normal;font-style:normal;transform:scaleX(0.815);transform-origin:100% 0;">FOUN-L</div></div>
<div class="z" style="left:350.80px;top:514.17px;"><div class="t" style="right:0;top:0;font-size:8.3px;line-height:8.3px;color:#111;font-weight:normal;font-style:normal;transform:scaleX(0.815);transform-origin:100% 0;">143-2105</div></div>
<div class="z" style="left:417.60px;top:514.17px;"><div class="t" style="right:0;top:0;font-size:8.3px;line-height:8.3px;color:#111;font-weight:normal;font-style:normal;transform:scaleX(0.815);transform-origin:100% 0;">WOOD-02-0500-2</div></div>
<div class="t" style="left:422.00px;top:514.17px;font-size:8.3px;line-height:8.3px;color:#111;font-weight:normal;font-style:normal;transform:scaleX(0.815);transform-origin:0 0;white-space:pre;">Foundation Form Board</div>
<div class="z" style="left:595.00px;top:514.17px;"><div class="t" style="right:0;top:0;font-size:8.3px;line-height:8.3px;color:#111;font-weight:normal;font-style:normal;transform:scaleX(0.815);transform-origin:100% 0;">14YPMR</div></div>
<div class="t" style="left:599.00px;top:514.17px;font-size:8.3px;line-height:8.3px;color:#111;font-weight:normal;font-style:normal;transform:scaleX(0.815);transform-origin:0 0;">2"x10"</div>
<div class="z" style="left:698.30px;top:514.17px;"><div class="t" style="right:0;top:0;font-size:8.3px;line-height:8.3px;color:#111;font-weight:normal;font-style:normal;transform:scaleX(0.815);transform-origin:100% 0;">242</div></div>
<div class="t" style="left:702.70px;top:514.17px;font-size:8.3px;line-height:8.3px;color:#111;font-weight:normal;font-style:normal;transform:scaleX(0.815);transform-origin:0 0;">FEET</div>
<div class="z" style="left:782.50px;top:514.17px;"><div class="t" style="right:0;top:0;font-size:8.3px;line-height:8.3px;color:#111;font-weight:normal;font-style:normal;transform:scaleX(0.815);transform-origin:100% 0;">0.98</div></div>
<div class="r" style="left:819.3px;top:521px;width:4.8px;height:1px;background:#444;"></div>
<div class="z" style="left:871.40px;top:514.17px;"><div class="t" style="right:0;top:0;font-size:8.3px;line-height:8.3px;color:#111;font-weight:normal;font-style:normal;transform:scaleX(0.815);transform-origin:100% 0;">16.60</div></div>
<div class="z" style="left:916.40px;top:514.17px;"><div class="t" style="right:0;top:0;font-size:8.3px;line-height:8.3px;color:#111;font-weight:normal;font-style:normal;transform:scaleX(0.815);transform-origin:100% 0;">253.76</div></div>
<div class="z" style="left:297.00px;top:523.27px;"><div class="t" style="right:0;top:0;font-size:8.3px;line-height:8.3px;color:#111;font-weight:normal;font-style:normal;transform:scaleX(0.815);transform-origin:100% 0;">FOUN-L</div></div>
<div class="z" style="left:350.80px;top:523.27px;"><div class="t" style="right:0;top:0;font-size:8.3px;line-height:8.3px;color:#111;font-weight:normal;font-style:normal;transform:scaleX(0.815);transform-origin:100% 0;">143-2105</div></div>
<div class="z" style="left:417.60px;top:523.27px;"><div class="t" style="right:0;top:0;font-size:8.3px;line-height:8.3px;color:#111;font-weight:normal;font-style:normal;transform:scaleX(0.815);transform-origin:100% 0;">WOOD-02-0564</div></div>
<div class="t" style="left:422.00px;top:523.27px;font-size:8.3px;line-height:8.3px;color:#111;font-weight:normal;font-style:normal;transform:scaleX(0.815);transform-origin:0 0;white-space:pre;">Foundation Form Stake</div>
<div class="z" style="left:595.00px;top:523.27px;"><div class="t" style="right:0;top:0;font-size:8.3px;line-height:8.3px;color:#111;font-weight:normal;font-style:normal;transform:scaleX(0.815);transform-origin:100% 0;">2412YP3</div></div>
<div class="t" style="left:599.00px;top:523.27px;font-size:8.3px;line-height:8.3px;color:#111;font-weight:normal;font-style:normal;transform:scaleX(0.815);transform-origin:0 0;">2"x4"</div>
<div class="z" style="left:698.30px;top:523.27px;"><div class="t" style="right:0;top:0;font-size:8.3px;line-height:8.3px;color:#111;font-weight:normal;font-style:normal;transform:scaleX(0.815);transform-origin:100% 0;">182</div></div>
<div class="t" style="left:702.70px;top:523.27px;font-size:8.3px;line-height:8.3px;color:#111;font-weight:normal;font-style:normal;transform:scaleX(0.815);transform-origin:0 0;">FEET</div>
<div class="z" style="left:782.50px;top:523.27px;"><div class="t" style="right:0;top:0;font-size:8.3px;line-height:8.3px;color:#111;font-weight:normal;font-style:normal;transform:scaleX(0.815);transform-origin:100% 0;">0.22</div></div>
<div class="r" style="left:819.3px;top:531px;width:4.8px;height:1px;background:#444;"></div>
<div class="z" style="left:871.40px;top:523.27px;"><div class="t" style="right:0;top:0;font-size:8.3px;line-height:8.3px;color:#111;font-weight:normal;font-style:normal;transform:scaleX(0.815);transform-origin:100% 0;">2.80</div></div>
<div class="z" style="left:916.40px;top:523.27px;"><div class="t" style="right:0;top:0;font-size:8.3px;line-height:8.3px;color:#111;font-weight:normal;font-style:normal;transform:scaleX(0.815);transform-origin:100% 0;">42.84</div></div>
<div class="z" style="left:297.00px;top:532.37px;"><div class="t" style="right:0;top:0;font-size:8.3px;line-height:8.3px;color:#111;font-weight:normal;font-style:normal;transform:scaleX(0.815);transform-origin:100% 0;">FOUN-P</div></div>
<div class="z" style="left:350.80px;top:532.37px;"><div class="t" style="right:0;top:0;font-size:8.3px;line-height:8.3px;color:#111;font-weight:normal;font-style:normal;transform:scaleX(0.815);transform-origin:100% 0;">143-2105</div></div>
<div class="z" style="left:417.60px;top:532.37px;"><div class="t" style="right:0;top:0;font-size:8.3px;line-height:8.3px;color:#111;font-weight:normal;font-style:normal;transform:scaleX(0.815);transform-origin:100% 0;">T&amp;M-09-0060</div></div>
<div class="t" style="left:422.00px;top:532.37px;font-size:8.3px;line-height:8.3px;color:#111;font-weight:normal;font-style:normal;transform:scaleX(0.815);transform-origin:0 0;white-space:pre;">Slab Perimeter Insulation</div>
<div class="z" style="left:595.00px;top:532.37px;"><div class="t" style="right:0;top:0;font-size:8.3px;line-height:8.3px;color:#111;font-weight:normal;font-style:normal;transform:scaleX(0.815);transform-origin:100% 0;">8DOW12</div></div>
<div class="t" style="left:599.00px;top:532.37px;font-size:8.3px;line-height:8.3px;color:#111;font-weight:normal;font-style:normal;transform:scaleX(0.815);transform-origin:0 0;">1"x4'0"x8'0"</div>
<div class="z" style="left:698.30px;top:532.37px;"><div class="t" style="right:0;top:0;font-size:8.3px;line-height:8.3px;color:#111;font-weight:normal;font-style:normal;transform:scaleX(0.815);transform-origin:100% 0;">13</div></div>
<div class="t" style="left:702.70px;top:532.37px;font-size:8.3px;line-height:8.3px;color:#111;font-weight:normal;font-style:normal;transform:scaleX(0.815);transform-origin:0 0;">EACH</div>
<div class="z" style="left:782.50px;top:532.37px;"><div class="t" style="right:0;top:0;font-size:8.3px;line-height:8.3px;color:#111;font-weight:normal;font-style:normal;transform:scaleX(0.815);transform-origin:100% 0;">10.00</div></div>
<div class="r" style="left:819.3px;top:540px;width:4.8px;height:1px;background:#444;"></div>
<div class="z" style="left:871.40px;top:532.37px;"><div class="t" style="right:0;top:0;font-size:8.3px;line-height:8.3px;color:#111;font-weight:normal;font-style:normal;transform:scaleX(0.815);transform-origin:100% 0;">9.10</div></div>
<div class="z" style="left:916.40px;top:532.37px;"><div class="t" style="right:0;top:0;font-size:8.3px;line-height:8.3px;color:#111;font-weight:normal;font-style:normal;transform:scaleX(0.815);transform-origin:100% 0;">139.10</div></div>
<div class="z" style="left:297.00px;top:541.47px;"><div class="t" style="right:0;top:0;font-size:8.3px;line-height:8.3px;color:#111;font-weight:normal;font-style:normal;transform:scaleX(0.815);transform-origin:100% 0;">FOUN-P</div></div>
<div class="z" style="left:350.80px;top:541.47px;"><div class="t" style="right:0;top:0;font-size:8.3px;line-height:8.3px;color:#111;font-weight:normal;font-style:normal;transform:scaleX(0.815);transform-origin:100% 0;">143-2105</div></div>
<div class="z" style="left:417.60px;top:541.47px;"><div class="t" style="right:0;top:0;font-size:8.3px;line-height:8.3px;color:#111;font-weight:normal;font-style:normal;transform:scaleX(0.815);transform-origin:100% 0;">GEN-04-MAB15or23</div></div>
<div class="t" style="left:422.00px;top:541.47px;font-size:8.3px;line-height:8.3px;color:#111;font-weight:normal;font-style:normal;transform:scaleX(0.815);transform-origin:0 0;white-space:pre;">Anchor Strap</div>
<div class="z" style="left:595.00px;top:541.47px;"><div class="t" style="right:0;top:0;font-size:8.3px;line-height:8.3px;color:#111;font-weight:normal;font-style:normal;transform:scaleX(0.815);transform-origin:100% 0;">MASMUDSILL</div></div>
<div class="z" style="left:698.30px;top:541.47px;"><div class="t" style="right:0;top:0;font-size:8.3px;line-height:8.3px;color:#111;font-weight:normal;font-style:normal;transform:scaleX(0.815);transform-origin:100% 0;">20</div></div>
<div class="t" style="left:702.70px;top:541.47px;font-size:8.3px;line-height:8.3px;color:#111;font-weight:normal;font-style:normal;transform:scaleX(0.815);transform-origin:0 0;">EACH</div>
<div class="z" style="left:782.50px;top:541.47px;"><div class="t" style="right:0;top:0;font-size:8.3px;line-height:8.3px;color:#111;font-weight:normal;font-style:normal;transform:scaleX(0.815);transform-origin:100% 0;">0.79</div></div>
<div class="r" style="left:819.3px;top:549px;width:4.8px;height:1px;background:#444;"></div>
<div class="z" style="left:871.40px;top:541.47px;"><div class="t" style="right:0;top:0;font-size:8.3px;line-height:8.3px;color:#111;font-weight:normal;font-style:normal;transform:scaleX(0.815);transform-origin:100% 0;">1.10</div></div>
<div class="z" style="left:916.40px;top:541.47px;"><div class="t" style="right:0;top:0;font-size:8.3px;line-height:8.3px;color:#111;font-weight:normal;font-style:normal;transform:scaleX(0.815);transform-origin:100% 0;">16.90</div></div>
<div class="z" style="left:297.00px;top:550.57px;"><div class="t" style="right:0;top:0;font-size:8.3px;line-height:8.3px;color:#111;font-weight:normal;font-style:normal;transform:scaleX(0.815);transform-origin:100% 0;">FOUN-P</div></div>
<div class="z" style="left:350.80px;top:550.57px;"><div class="t" style="right:0;top:0;font-size:8.3px;line-height:8.3px;color:#111;font-weight:normal;font-style:normal;transform:scaleX(0.815);transform-origin:100% 0;">143-2105</div></div>
<div class="z" style="left:417.60px;top:550.57px;"><div class="t" style="right:0;top:0;font-size:8.3px;line-height:8.3px;color:#111;font-weight:normal;font-style:normal;transform:scaleX(0.815);transform-origin:100% 0;">SITE-04-0023-1</div></div>
<div class="t" style="left:422.00px;top:550.57px;font-size:8.3px;line-height:8.3px;color:#111;font-weight:normal;font-style:normal;transform:scaleX(0.815);transform-origin:0 0;white-space:pre;">Silt Fence</div>
<div class="z" style="left:595.00px;top:550.57px;"><div class="t" style="right:0;top:0;font-size:8.3px;line-height:8.3px;color:#111;font-weight:normal;font-style:normal;transform:scaleX(0.815);transform-origin:100% 0;">3'x100'/SILTFEN</div></div>
<div class="z" style="left:698.30px;top:550.57px;"><div class="t" style="right:0;top:0;font-size:8.3px;line-height:8.3px;color:#111;font-weight:normal;font-style:normal;transform:scaleX(0.815);transform-origin:100% 0;">1</div></div>
<div class="t" style="left:702.70px;top:550.57px;font-size:8.3px;line-height:8.3px;color:#111;font-weight:normal;font-style:normal;transform:scaleX(0.815);transform-origin:0 0;">EACH</div>
<div class="z" style="left:782.50px;top:550.57px;"><div class="t" style="right:0;top:0;font-size:8.3px;line-height:8.3px;color:#111;font-weight:normal;font-style:normal;transform:scaleX(0.815);transform-origin:100% 0;">25.00</div></div>
<div class="r" style="left:819.3px;top:558px;width:4.8px;height:1px;background:#444;"></div>
<div class="z" style="left:871.40px;top:550.57px;"><div class="t" style="right:0;top:0;font-size:8.3px;line-height:8.3px;color:#111;font-weight:normal;font-style:normal;transform:scaleX(0.815);transform-origin:100% 0;">1.75</div></div>
<div class="z" style="left:916.40px;top:550.57px;"><div class="t" style="right:0;top:0;font-size:8.3px;line-height:8.3px;color:#111;font-weight:normal;font-style:normal;transform:scaleX(0.815);transform-origin:100% 0;">26.75</div></div>
<div class="z" style="left:297.00px;top:559.67px;"><div class="t" style="right:0;top:0;font-size:8.3px;line-height:8.3px;color:#111;font-weight:normal;font-style:normal;transform:scaleX(0.815);transform-origin:100% 0;">FOUN-P</div></div>
<div class="z" style="left:350.80px;top:559.67px;"><div class="t" style="right:0;top:0;font-size:8.3px;line-height:8.3px;color:#111;font-weight:normal;font-style:normal;transform:scaleX(0.815);transform-origin:100% 0;">143-2105</div></div>
<div class="z" style="left:417.60px;top:559.67px;"><div class="t" style="right:0;top:0;font-size:8.3px;line-height:8.3px;color:#111;font-weight:normal;font-style:normal;transform:scaleX(0.815);transform-origin:100% 0;">T&amp;M-04-620100</div></div>
<div class="t" style="left:422.00px;top:559.67px;font-size:8.3px;line-height:8.3px;color:#111;font-weight:normal;font-style:normal;transform:scaleX(0.815);transform-origin:0 0;white-space:pre;">MoistBarrierSlab</div>
<div class="z" style="left:593.20px;top:559.67px;"><div class="t" style="right:0;top:0;font-size:8.3px;line-height:8.3px;color:#111;font-weight:normal;font-style:normal;transform:scaleX(0.815);transform-origin:100% 0;">20100POL6</div></div>
<div class="z" style="left:698.30px;top:559.67px;"><div class="t" style="right:0;top:0;font-size:8.3px;line-height:8.3px;color:#111;font-weight:normal;font-style:normal;transform:scaleX(0.815);transform-origin:100% 0;">942</div></div>
<div class="t" style="left:702.70px;top:559.67px;font-size:8.3px;line-height:8.3px;color:#111;font-weight:normal;font-style:normal;transform:scaleX(0.815);transform-origin:0 0;">SQFT</div>
<div class="z" style="left:782.50px;top:559.67px;"><div class="t" style="right:0;top:0;font-size:8.3px;line-height:8.3px;color:#111;font-weight:normal;font-style:normal;transform:scaleX(0.815);transform-origin:100% 0;">0.02</div></div>
<div class="r" style="left:819.3px;top:567px;width:4.8px;height:1px;background:#444;"></div>
<div class="z" style="left:871.40px;top:559.67px;"><div class="t" style="right:0;top:0;font-size:8.3px;line-height:8.3px;color:#111;font-weight:normal;font-style:normal;transform:scaleX(0.815);transform-origin:100% 0;">1.31</div></div>
<div class="z" style="left:916.40px;top:559.67px;"><div class="t" style="right:0;top:0;font-size:8.3px;line-height:8.3px;color:#111;font-weight:normal;font-style:normal;transform:scaleX(0.815);transform-origin:100% 0;">20.15</div></div>
<div class="z" style="left:417.60px;top:568.77px;"><div class="t" style="right:0;top:0;font-size:8.3px;line-height:8.3px;color:#111;font-weight:normal;font-style:normal;transform:scaleX(0.815);transform-origin:100% 0;">T&amp;M-04-0000</div></div>
<div class="t" style="left:422.00px;top:568.77px;font-size:8.3px;line-height:8.3px;color:#111;font-weight:normal;font-style:normal;transform:scaleX(0.815);transform-origin:0 0;white-space:pre;">VaporBarrier</div>
<div class="z" style="left:698.30px;top:568.77px;"><div class="t" style="right:0;top:0;font-size:8.3px;line-height:8.3px;color:#111;font-weight:normal;font-style:normal;transform:scaleX(0.815);transform-origin:100% 0;">1673</div></div>
<div class="t" style="left:702.70px;top:568.77px;font-size:8.3px;line-height:8.3px;color:#111;font-weight:normal;font-style:normal;transform:scaleX(0.815);transform-origin:0 0;">SQFT</div>
<div class="z" style="left:782.50px;top:568.77px;"><div class="t" style="right:0;top:0;font-size:8.3px;line-height:8.3px;color:#111;font-weight:normal;font-style:normal;transform:scaleX(0.815);transform-origin:100% 0;">0.04</div></div>
<div class="r" style="left:819.3px;top:576px;width:4.8px;height:1px;background:#444;"></div>
<div class="z" style="left:871.40px;top:568.77px;"><div class="t" style="right:0;top:0;font-size:8.3px;line-height:8.3px;color:#111;font-weight:normal;font-style:normal;transform:scaleX(0.815);transform-origin:100% 0;">4.68</div></div>
<div class="z" style="left:916.40px;top:568.77px;"><div class="t" style="right:0;top:0;font-size:8.3px;line-height:8.3px;color:#111;font-weight:normal;font-style:normal;transform:scaleX(0.815);transform-origin:100% 0;">71.60</div></div>
<div class="z" style="left:417.60px;top:577.87px;"><div class="t" style="right:0;top:0;font-size:8.3px;line-height:8.3px;color:#111;font-weight:normal;font-style:normal;transform:scaleX(0.815);transform-origin:100% 0;">T&amp;M-04-0000</div></div>
<div class="t" style="left:422.00px;top:577.87px;font-size:8.3px;line-height:8.3px;color:#111;font-weight:normal;font-style:normal;transform:scaleX(0.815);transform-origin:0 0;white-space:pre;">VaporBarrier(Clg)</div>
<div class="z" style="left:698.30px;top:577.87px;"><div class="t" style="right:0;top:0;font-size:8.3px;line-height:8.3px;color:#111;font-weight:normal;font-style:normal;transform:scaleX(0.815);transform-origin:100% 0;">1034</div></div>
<div class="t" style="left:702.70px;top:577.87px;font-size:8.3px;line-height:8.3px;color:#111;font-weight:normal;font-style:normal;transform:scaleX(0.815);transform-origin:0 0;">SQFT</div>
<div class="r" style="left:777.7px;top:585px;width:4.8px;height:1px;background:#444;"></div>
<div class="r" style="left:819.3px;top:585px;width:4.8px;height:1px;background:#444;"></div>
<div class="r" style="left:866.6px;top:585px;width:4.8px;height:1px;background:#444;"></div>
<div class="r" style="left:911.6px;top:585px;width:4.8px;height:1px;background:#444;"></div>
<div class="z" style="left:297.00px;top:586.97px;"><div class="t" style="right:0;top:0;font-size:8.3px;line-height:8.3px;color:#111;font-weight:normal;font-style:normal;transform:scaleX(0.815);transform-origin:100% 0;">TERM</div></div>
<div class="z" style="left:350.80px;top:586.97px;"><div class="t" style="right:0;top:0;font-size:8.3px;line-height:8.3px;color:#111;font-weight:normal;font-style:normal;transform:scaleX(0.815);transform-origin:100% 0;">143-2300</div></div>
<div class="z" style="left:417.60px;top:586.97px;"><div class="t" style="right:0;top:0;font-size:8.3px;line-height:8.3px;color:#111;font-weight:normal;font-style:normal;transform:scaleX(0.815);transform-origin:100% 0;">BS-0189</div></div>
<div class="t" style="left:422.00px;top:586.97px;font-size:8.3px;line-height:8.3px;color:#111;font-weight:normal;font-style:normal;transform:scaleX(0.815);transform-origin:0 0;white-space:pre;">Termite Protection</div>
<div class="z" style="left:595.00px;top:586.97px;"><div class="t" style="right:0;top:0;font-size:8.3px;line-height:8.3px;color:#111;font-weight:normal;font-style:normal;transform:scaleX(0.815);transform-origin:100% 0;">Pre-Treatment</div></div>
<div class="z" style="left:698.30px;top:586.97px;"><div class="t" style="right:0;top:0;font-size:8.3px;line-height:8.3px;color:#111;font-weight:normal;font-style:normal;transform:scaleX(0.815);transform-origin:100% 0;">1</div></div>
<div class="t" style="left:702.70px;top:586.97px;font-size:8.3px;line-height:8.3px;color:#111;font-weight:normal;font-style:normal;transform:scaleX(0.815);transform-origin:0 0;">EACH</div>
<div class="z" style="left:782.50px;top:586.97px;"><div class="t" style="right:0;top:0;font-size:8.3px;line-height:8.3px;color:#111;font-weight:normal;font-style:normal;transform:scaleX(0.815);transform-origin:100% 0;">200.00</div></div>
<div class="r" style="left:819.3px;top:594px;width:4.8px;height:1px;background:#444;"></div>
<div class="r" style="left:866.6px;top:594px;width:4.8px;height:1px;background:#444;"></div>
<div class="z" style="left:916.40px;top:586.97px;"><div class="t" style="right:0;top:0;font-size:8.3px;line-height:8.3px;color:#111;font-weight:normal;font-style:normal;transform:scaleX(0.815);transform-origin:100% 0;">200.00</div></div>
<div class="t" style="left:422.00px;top:596.07px;font-size:8.3px;line-height:8.3px;color:#111;font-weight:normal;font-style:normal;transform:scaleX(0.815);transform-origin:0 0;">SUBTOTAL</div>
<div class="z" style="left:916.40px;top:596.07px;"><div class="t" style="right:0;top:0;font-size:8.3px;line-height:8.3px;color:#111;font-weight:normal;font-style:normal;transform:scaleX(0.815);transform-origin:100% 0;">963.02</div></div>
<div class="t" style="left:422.00px;top:614.27px;font-size:8.3px;line-height:8.3px;color:#111;font-weight:normal;font-style:normal;transform:scaleX(0.815);transform-origin:0 0;">30000-31299 ROUGH Struct</div>
<div class="t" style="left:422.00px;top:622.67px;font-size:8.3px;line-height:8.3px;color:#111;font-weight:normal;font-style:normal;transform:scaleX(0.81);transform-origin:0 0;">****************************</div>
<div class="t" style="left:422.00px;top:632.47px;font-size:8.3px;line-height:8.3px;color:#111;font-weight:normal;font-style:normal;transform:scaleX(0.815);transform-origin:0 0;">31100-31199/FramingFloor</div>
</div>
<svg style="left:410px;top:402px" width="20" height="24" viewBox="410 402 20 24">
<path d="M415.4 407 V420.3 L418.3 417.6 L420.6 422.3 L422.3 421.5 L420 416.9 L424.4 416.7 Z" fill="#fff" stroke="#222" stroke-width=".9" stroke-linejoin="round"/>
</svg>
</body></html>
